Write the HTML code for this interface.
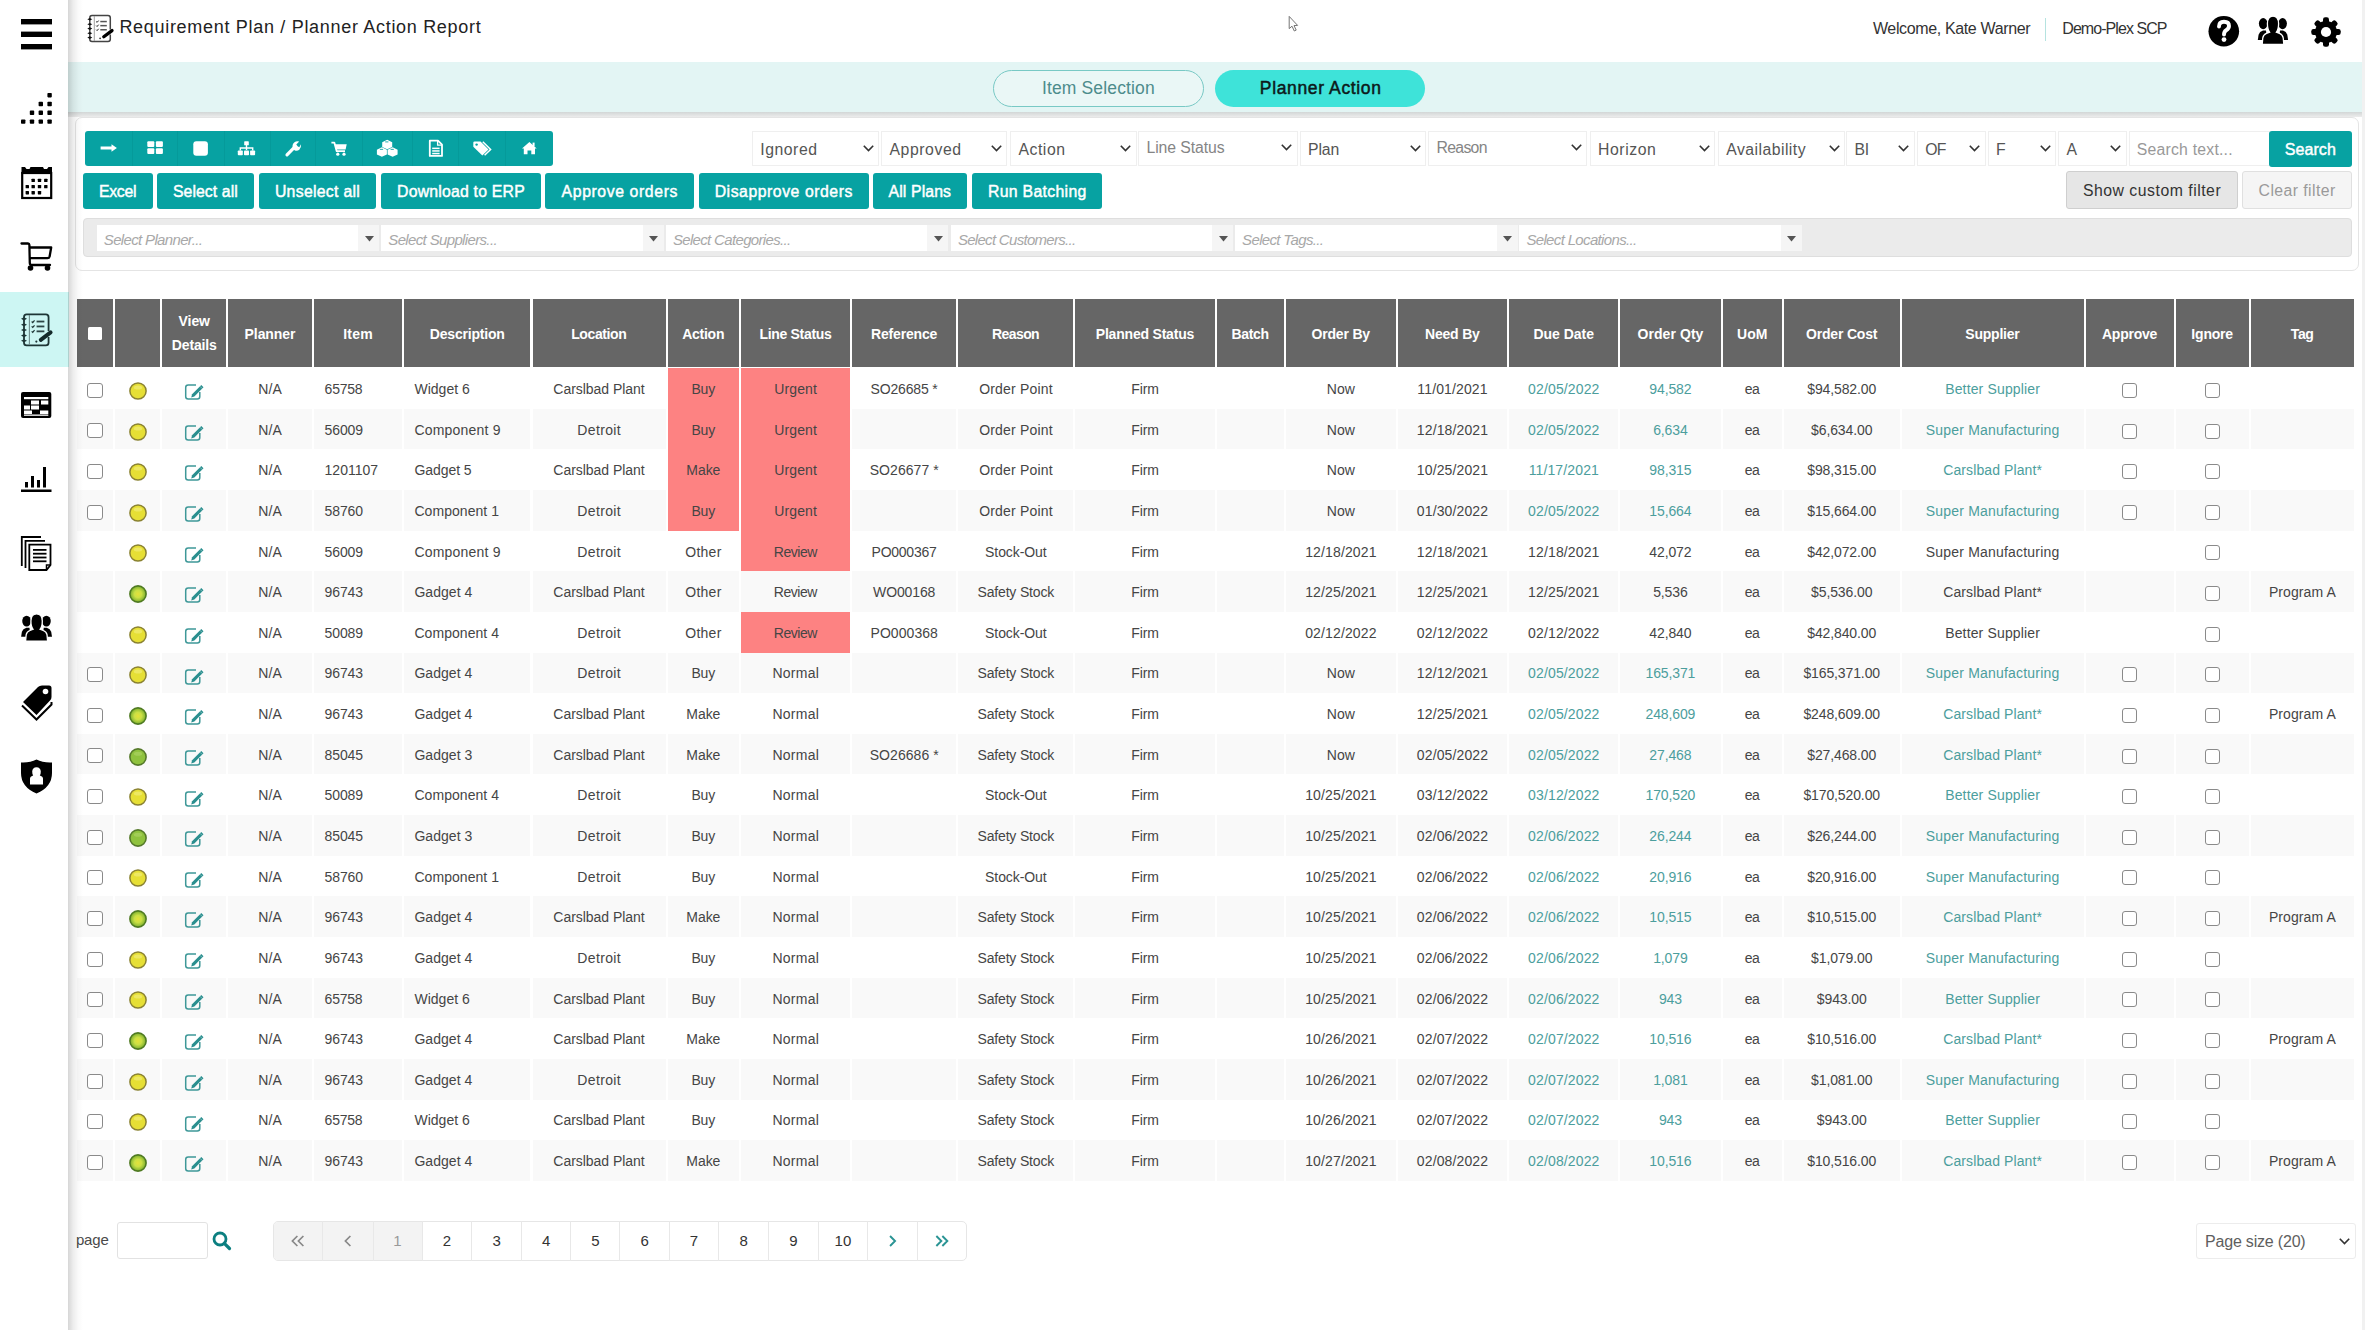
<!DOCTYPE html><html><head><meta charset="utf-8"><style>
html,body{margin:0;padding:0;}
body{width:2365px;height:1330px;position:relative;overflow:hidden;background:#fff;font-family:"Liberation Sans",sans-serif;color:#333;}
.ab{position:absolute;}
svg{position:absolute;overflow:visible;}
.t{position:absolute;white-space:nowrap;}
.btn{position:absolute;background:#07a2a2;border-radius:3px;color:#fff;font-weight:bold;font-size:15.5px;text-align:center;}
.sel{position:absolute;background:#fff;border:1px solid #efefef;box-sizing:border-box;color:#555;font-size:16.5px;}
.fsel{position:absolute;background:#fff;box-sizing:border-box;height:25.7px;top:224.9px;}
.farr{position:absolute;background:#f5f5f5;height:25.7px;top:224.9px;}
.ftxt{position:absolute;font-style:italic;color:#aaa;font-size:14px;top:5px;left:7px;white-space:nowrap;}
.hc{position:absolute;top:299.4px;height:68px;background:#666;color:#fff;font-weight:bold;font-size:14px;text-align:center;}
.c{position:absolute;height:40.63px;text-align:center;font-size:13.5px;color:#333;white-space:nowrap;}
.lk{color:#3aa7a7;}
.pg{position:absolute;top:1220.8px;height:40.2px;box-sizing:border-box;text-align:center;font-size:16px;color:#333;}
</style></head><body>

<div class="ab" style="left:0;top:0;width:68px;height:1330px;background:#fff"></div>
<div class="ab" style="left:0;top:292px;width:68.5px;height:74.5px;background:#cdf6f3"></div>
<svg style="left:21px;top:18.6px" width="31" height="31" viewBox="0 0 31 31"><rect x="0" y="0" width="31" height="5.4" fill="#000"/><rect x="0" y="12.6" width="31" height="5.4" fill="#000"/><rect x="0" y="25" width="31" height="5.4" fill="#000"/></svg>
<svg style="left:21px;top:92.9px" width="31" height="31" viewBox="0 0 31 31"><rect x="26.4" y="0.0" width="4.4" height="4.4" rx="0.8" fill="#000"/><rect x="17.6" y="8.799999999999997" width="4.4" height="4.4" rx="0.8" fill="#000"/><rect x="26.4" y="8.799999999999997" width="4.4" height="4.4" rx="0.8" fill="#000"/><rect x="8.8" y="17.599999999999994" width="4.4" height="4.4" rx="0.8" fill="#000"/><rect x="17.6" y="17.599999999999994" width="4.4" height="4.4" rx="0.8" fill="#000"/><rect x="26.4" y="17.599999999999994" width="4.4" height="4.4" rx="0.8" fill="#000"/><rect x="0" y="26.39999999999999" width="4.4" height="4.4" rx="0.8" fill="#000"/><rect x="8.8" y="26.39999999999999" width="4.4" height="4.4" rx="0.8" fill="#000"/><rect x="17.6" y="26.39999999999999" width="4.4" height="4.4" rx="0.8" fill="#000"/><rect x="26.4" y="26.39999999999999" width="4.4" height="4.4" rx="0.8" fill="#000"/></svg>
<svg style="left:20.8px;top:165.9px" width="31" height="33" viewBox="0 0 31 33"><path d="M0.5 1 L4 1 L5.5 3 L8.5 3 L9.5 1 L22 1 L23 3 L26 3 L27.5 1 L31 1 L31 8 L0.5 8 Z" fill="#000"/><rect x="1.2" y="7" width="29" height="25" fill="none" stroke="#000" stroke-width="2.2"/><rect x="10.5" y="12.700000000000006" width="3.4" height="3.4" rx="0.6" fill="#000"/><rect x="16.799999999999997" y="12.700000000000006" width="3.4" height="3.4" rx="0.6" fill="#000"/><rect x="23.1" y="12.700000000000006" width="3.4" height="3.4" rx="0.6" fill="#000"/><rect x="4.6000000000000005" y="18.899999999999995" width="3.4" height="3.4" rx="0.6" fill="#000"/><rect x="10.5" y="18.899999999999995" width="3.4" height="3.4" rx="0.6" fill="#000"/><rect x="16.799999999999997" y="18.899999999999995" width="3.4" height="3.4" rx="0.6" fill="#000"/><rect x="23.1" y="18.899999999999995" width="3.4" height="3.4" rx="0.6" fill="#000"/><rect x="4.6000000000000005" y="24.99999999999999" width="3.4" height="3.4" rx="0.6" fill="#000"/><rect x="10.5" y="24.99999999999999" width="3.4" height="3.4" rx="0.6" fill="#000"/><rect x="16.799999999999997" y="24.99999999999999" width="3.4" height="3.4" rx="0.6" fill="#000"/></svg>
<svg style="left:20.8px;top:242px" width="31" height="29" viewBox="0 0 31 29"><path d="M0.5 1.5 L7 1.5 Q8.3 1.5 8.4 3 L8.8 21 Q8.8 23 11 23 L29 23" fill="none" stroke="#000" stroke-width="2.3" stroke-linecap="round" stroke-linejoin="round"/><path d="M8.5 5.5 L30.2 5.5 L28.6 14.5 Q28.2 16.2 26.4 16.2 L8.7 16.2" fill="none" stroke="#000" stroke-width="2.3" stroke-linejoin="round"/><circle cx="9.5" cy="26" r="2.8" fill="#000"/><circle cx="26.5" cy="26" r="2.8" fill="#000"/></svg>
<svg style="left:21.2px;top:391.9px" width="31" height="26" viewBox="0 0 31 26"><rect x="0" y="0" width="30.3" height="26" rx="2" fill="#000"/><rect x="3" y="5" width="24.3" height="2.2" fill="#fff"/><rect x="10" y="8.5" width="8" height="4" fill="#fff"/><rect x="20" y="8.5" width="7.3" height="4" fill="#fff"/><rect x="3" y="13.5" width="6" height="4" fill="#fff"/><rect x="10" y="13.5" width="8" height="4" fill="#fff"/><rect x="3" y="18.5" width="8" height="3.5" fill="#fff"/><rect x="19" y="18.5" width="8.3" height="3.5" fill="#fff"/><rect x="3" y="22.5" width="24.3" height="1.3" fill="#fff"/></svg>
<svg style="left:21px;top:466.5px" width="31" height="25" viewBox="0 0 31 25"><rect x="0" y="22.5" width="30.5" height="2.5" fill="#000"/><rect x="4" y="15" width="3" height="5.5" fill="#000"/><rect x="10" y="9" width="3" height="11.5" fill="#000"/><rect x="16" y="13" width="3" height="7.5" fill="#000"/><rect x="22" y="0" width="3" height="20.5" fill="#000"/></svg>
<svg style="left:21px;top:536px" width="31" height="35" viewBox="0 0 31 35"><path d="M0.8 30 L0.8 1 L20 1" fill="none" stroke="#000" stroke-width="1.8"/><path d="M4.5 32 L4.5 4.8 L24 4.8" fill="none" stroke="#000" stroke-width="1.8"/><path d="M8.3 8.6 L29.5 8.6 L29.5 29 L25.5 34 L8.3 34 Z" fill="#fff" stroke="#000" stroke-width="1.8"/><path d="M25.5 34 L25.5 29 L29.5 29" fill="none" stroke="#000" stroke-width="1.5"/><rect x="12" y="13.0" width="13.5" height="1.8" fill="#000"/><rect x="12" y="16.8" width="13.5" height="1.8" fill="#000"/><rect x="12" y="20.6" width="13.5" height="1.8" fill="#000"/><rect x="12" y="24.4" width="13.5" height="1.8" fill="#000"/></svg>
<svg style="left:21px;top:613.5px" width="31" height="27" viewBox="0 0 30.4 28.2" preserveAspectRatio="none"><ellipse cx="5.5" cy="7.4" rx="4.3" ry="5.6" fill="#000"/><path d="M0.1 23.8 L0.9 18.6 Q1.8 15.4 5.3 14.4 L8.3 14.4 L9.3 23.8 Z" fill="#000"/><ellipse cx="24.9" cy="7.4" rx="4.3" ry="5.6" fill="#000"/><path d="M30.4 23.8 L29.6 18.6 Q28.7 15.4 25.3 14.4 L22.3 14.4 L21.3 23.8 Z" fill="#000"/><path d="M4.5 28.2 L5.1 21.6 Q5.7 18.4 8.8 17.2 L11.9 16 Q9.7 13.3 9.7 7.4 Q9.9 0 15.3 0 Q20.7 0 20.9 7.4 Q20.9 13.3 18.7 16 L21.8 17.2 Q24.9 18.4 25.5 21.6 L26.1 28.2 Z" fill="#000" stroke="#fff" stroke-width="1.3"/></svg>
<svg style="left:21px;top:685px" width="31" height="35" viewBox="0 0 31 35"><path d="M1 20.5 L15.5 34.5 L30.5 19.5 L30.5 17" fill="none" stroke="#000" stroke-width="2"/><path d="M2 17 L17 2 Q18.5 0.5 21 0.5 L28 0.5 Q30.5 0.5 30.5 3 L30.5 12 Q30.5 14 29 15.5 L15.5 30 Z" fill="#000"/><circle cx="24.5" cy="6.5" r="2.8" fill="#fff"/></svg>
<svg style="left:21px;top:759px" width="31" height="35" viewBox="0 0 31 35"><path d="M15.5 0.5 Q22 4 31 3.5 L31 14 Q31 28 15.5 34.5 Q0 28 0 14 L0 3.5 Q9 4 15.5 0.5 Z" fill="#000"/><path d="M9 25.5 L9 19.5 Q9 17.5 11 17 L12.2 16.6 Q11.2 15.4 11.2 12.5 Q11.4 8.5 15.5 8.3 Q19.6 8.5 19.8 12.5 Q19.8 15.4 18.8 16.6 L20 17 Q22 17.5 22 19.5 L22 25.5 Z" fill="#fff"/></svg>
<div class="ab" style="left:68px;top:0;width:15px;height:1330px;background:linear-gradient(to right,rgba(0,0,0,0.16),rgba(0,0,0,0.07) 35%,rgba(0,0,0,0.02) 70%,rgba(0,0,0,0));z-index:5"></div>
<div class="ab" style="left:2361.5px;top:0;width:3.5px;height:1330px;background:#f1f1f1"></div>
<svg style="left:0;top:0" width="130" height="50" viewBox="0 0 130 50"><path d="M92 15.6 L108 15.6 Q110.3 15.6 110.3 17.9 L110.3 29.5 M110.3 34.5 L110.3 39.3 Q110.3 41.5 108 41.5 L92 41.5 Q89.8 41.5 89.8 39.3 L89.8 17.9 Q89.8 15.6 92 15.6" fill="none" stroke="#444" stroke-width="1.5"/><line x1="94.3" y1="16" x2="94.3" y2="41" stroke="#999" stroke-width="0.9"/><path d="M87.3 19.3 L89.8 18.0 L92.3 19.3 L89.8 20.6 Z" fill="#111"/><path d="M87.3 24.2 L89.8 22.9 L92.3 24.2 L89.8 25.5 Z" fill="#111"/><path d="M87.3 28.6 L89.8 27.3 L92.3 28.6 L89.8 29.900000000000002 Z" fill="#111"/><path d="M87.3 33.3 L89.8 31.999999999999996 L92.3 33.3 L89.8 34.599999999999994 Z" fill="#111"/><path d="M87.3 37.6 L89.8 36.300000000000004 L92.3 37.6 L89.8 38.9 Z" fill="#111"/><path d="M96.2 21.5 l0.9 0.9 l1.5 -1.8" fill="none" stroke="#222" stroke-width="1"/><rect x="100.3" y="20.8" width="6.5" height="1.5" fill="#555"/><path d="M96.2 25.6 l0.9 0.9 l1.5 -1.8" fill="none" stroke="#222" stroke-width="1"/><rect x="100.3" y="24.900000000000002" width="6.5" height="1.5" fill="#555"/><path d="M96.2 29.7 l0.9 0.9 l1.5 -1.8" fill="none" stroke="#222" stroke-width="1"/><rect x="100.3" y="29.0" width="6.5" height="1.5" fill="#555"/><path d="M103.8 36.8 L112 30.6" stroke="#000" stroke-width="3.3" stroke-linecap="round"/><circle cx="100.1" cy="38.3" r="0.9" fill="#333"/></svg>
<svg style="left:21.2px;top:313.7px" width="32" height="34" viewBox="87.3 15.3 26.7 28.3"><path d="M92 15.6 L108 15.6 Q110.3 15.6 110.3 17.9 L110.3 29.5 M110.3 34.5 L110.3 39.3 Q110.3 41.5 108 41.5 L92 41.5 Q89.8 41.5 89.8 39.3 L89.8 17.9 Q89.8 15.6 92 15.6" fill="none" stroke="#1d3535" stroke-width="1.5"/><line x1="94.3" y1="16" x2="94.3" y2="41" stroke="#6a8a8a" stroke-width="0.9"/><path d="M87.3 19.3 L89.8 18.0 L92.3 19.3 L89.8 20.6 Z" fill="#1d3535"/><path d="M87.3 24.2 L89.8 22.9 L92.3 24.2 L89.8 25.5 Z" fill="#1d3535"/><path d="M87.3 28.6 L89.8 27.3 L92.3 28.6 L89.8 29.900000000000002 Z" fill="#1d3535"/><path d="M87.3 33.3 L89.8 31.999999999999996 L92.3 33.3 L89.8 34.599999999999994 Z" fill="#1d3535"/><path d="M87.3 37.6 L89.8 36.300000000000004 L92.3 37.6 L89.8 38.9 Z" fill="#1d3535"/><path d="M96.2 21.5 l0.9 0.9 l1.5 -1.8" fill="none" stroke="#1d3535" stroke-width="1"/><rect x="100.3" y="20.8" width="6.5" height="1.5" fill="#2d4545"/><path d="M96.2 25.6 l0.9 0.9 l1.5 -1.8" fill="none" stroke="#1d3535" stroke-width="1"/><rect x="100.3" y="24.900000000000002" width="6.5" height="1.5" fill="#2d4545"/><path d="M96.2 29.7 l0.9 0.9 l1.5 -1.8" fill="none" stroke="#1d3535" stroke-width="1"/><rect x="100.3" y="29.0" width="6.5" height="1.5" fill="#2d4545"/><path d="M103.8 36.8 L112 30.6" stroke="#142a2a" stroke-width="3.3" stroke-linecap="round"/><circle cx="100.1" cy="38.3" r="0.9" fill="#1d3535"/></svg>
<div class="t" style="left:119.4px;top:18.16px;font-size:18px;line-height:18px;color:#222;letter-spacing:0.695px;">Requirement Plan / Planner Action Report</div>
<div class="t" style="left:1872.9px;top:20.96px;font-size:16px;line-height:16px;color:#333;letter-spacing:-0.360px;">Welcome, Kate Warner</div>
<div class="ab" style="left:2045px;top:17.8px;width:1.3px;height:23px;background:#b5e3e0"></div>
<div class="t" style="left:2062.3px;top:20.96px;font-size:16px;line-height:16px;color:#333;letter-spacing:-0.944px;">Demo-Plex SCP</div>
<svg style="left:0;top:0" width="2365" height="60" viewBox="0 0 2365 60"><circle cx="2223.8" cy="31.3" r="15.3" fill="#000"/><path d="M2219 26.5 Q2219 21.8 2224 21.8 Q2229 21.8 2229 26 Q2229 28.6 2226.2 30.2 Q2224 31.5 2224 34.6" fill="none" stroke="#fff" stroke-width="3.9" stroke-linecap="round" stroke-linejoin="round"/><circle cx="2224" cy="39.6" r="2.4" fill="#fff"/><ellipse cx="2263.2" cy="23.6" rx="4.3" ry="5.6" fill="#000"/><path d="M2257.8 40 L2258.6 34.8 Q2259.5 31.6 2263 30.6 L2266 30.6 L2267 40 Z" fill="#000"/><ellipse cx="2282.6" cy="23.6" rx="4.3" ry="5.6" fill="#000"/><path d="M2288.1 40 L2287.3 34.8 Q2286.4 31.6 2283 30.6 L2280 30.6 L2279 40 Z" fill="#000"/><path d="M2262.2 44.4 L2262.8 37.8 Q2263.4 34.6 2266.5 33.4 L2269.6 32.2 Q2267.4 29.5 2267.4 23.6 Q2267.6 16.2 2273 16.2 Q2278.4 16.2 2278.6 23.6 Q2278.6 29.5 2276.4 32.2 L2279.5 33.4 Q2282.6 34.6 2283.2 37.8 L2283.8 44.4 Z" fill="#000" stroke="#fff" stroke-width="1.3"/></svg>
<svg style="left:2296px;top:2px" width="60" height="60" viewBox="-30 -30 60 60"><g transform="translate(0 0)"><rect x="-3" y="-14.7" width="6" height="8" rx="2.2" fill="#000" transform="rotate(0)"/><rect x="-3" y="-14.7" width="6" height="8" rx="2.2" fill="#000" transform="rotate(45)"/><rect x="-3" y="-14.7" width="6" height="8" rx="2.2" fill="#000" transform="rotate(90)"/><rect x="-3" y="-14.7" width="6" height="8" rx="2.2" fill="#000" transform="rotate(135)"/><rect x="-3" y="-14.7" width="6" height="8" rx="2.2" fill="#000" transform="rotate(180)"/><rect x="-3" y="-14.7" width="6" height="8" rx="2.2" fill="#000" transform="rotate(225)"/><rect x="-3" y="-14.7" width="6" height="8" rx="2.2" fill="#000" transform="rotate(270)"/><rect x="-3" y="-14.7" width="6" height="8" rx="2.2" fill="#000" transform="rotate(315)"/><circle r="11" fill="#000"/><circle r="5.1" fill="#fff"/></g></svg>
<svg style="left:0;top:0" width="1400" height="40" viewBox="0 0 1400 40"><path d="M1289.2 16.4 L1289.2 28.6 L1292 26.2 L1294.3 31 L1296.2 30.1 L1294 25.6 L1297.6 25.4 Z" fill="#fff" stroke="#666" stroke-width="0.9" stroke-linejoin="round"/></svg>
<div class="ab" style="left:68px;top:61.8px;width:2294px;height:50.6px;background:#e3f5f4"></div>
<div class="ab" style="left:68px;top:112.4px;width:2294px;height:5px;background:linear-gradient(to bottom,#d2d6d6,#ececec)"></div>
<div class="ab" style="left:993px;top:69.6px;width:210.7px;height:37.9px;box-sizing:border-box;border:1.8px solid #78c9c5;border-radius:19px;background:#eaf7f6"></div>
<div class="t" style="left:993.075390625px;width:210.7px;text-align:center;top:80.09px;font-size:17.5px;line-height:17.5px;color:#4d8c8c;letter-spacing:0.151px;">Item Selection</div>
<div class="ab" style="left:1215.4px;top:70px;width:210px;height:37px;border-radius:19px;background:#3ee3d9"></div>
<div class="t" style="left:1215.7159598214287px;width:210px;text-align:center;top:80.09px;font-size:17.5px;line-height:17.5px;color:#0d1a1a;-webkit-text-stroke:0.5px #0d1a1a;letter-spacing:0.632px;">Planner Action</div>
<div class="ab" style="left:74.7px;top:117.3px;width:2284.3px;height:153.7px;box-sizing:border-box;border:1px solid #e4e4e4;border-radius:7px;background:#fff"></div>
<div class="ab" style="left:85.3px;top:130.6px;width:467.5px;height:35.9px;background:#07a2a2;border-radius:3px"></div>
<div class="ab" style="left:131.6px;top:130.6px;width:1px;height:35.9px;background:#059494;opacity:0.6"></div>
<div class="ab" style="left:177.3px;top:130.6px;width:1px;height:35.9px;background:#059494;opacity:0.6"></div>
<div class="ab" style="left:224.1px;top:130.6px;width:1px;height:35.9px;background:#059494;opacity:0.6"></div>
<div class="ab" style="left:269.5px;top:130.6px;width:1px;height:35.9px;background:#059494;opacity:0.6"></div>
<div class="ab" style="left:315.2px;top:130.6px;width:1px;height:35.9px;background:#059494;opacity:0.6"></div>
<div class="ab" style="left:362.0px;top:130.6px;width:1px;height:35.9px;background:#059494;opacity:0.6"></div>
<div class="ab" style="left:412.4px;top:130.6px;width:1px;height:35.9px;background:#059494;opacity:0.6"></div>
<div class="ab" style="left:458.0px;top:130.6px;width:1px;height:35.9px;background:#059494;opacity:0.6"></div>
<div class="ab" style="left:505.0px;top:130.6px;width:1px;height:35.9px;background:#059494;opacity:0.6"></div>
<svg style="left:0;top:0" width="600" height="200" viewBox="0 0 600 200"><path d="M100.6 146.6 L111.5 146.6 L111.5 144.2 L116.9 148 L111.5 151.7 L111.5 149.6 L100.6 149.6 Z" fill="#fff"/><rect x="147.3" y="141.2" width="7" height="5.7" rx="1" fill="#fff"/><rect x="155.9" y="141.2" width="7" height="5.7" rx="1" fill="#fff"/><rect x="147.3" y="148.3" width="7" height="5.7" rx="1" fill="#fff"/><rect x="155.9" y="148.3" width="7" height="5.7" rx="1" fill="#fff"/><rect x="193.3" y="141.3" width="14.6" height="14.4" rx="3" fill="#fff"/><rect x="244.2" y="141.3" width="4.6" height="4" rx="0.6" fill="#fff"/><path d="M246.5 145 L246.5 150 M240.3 150.5 L240.3 148 L252.7 148 L252.7 150.5" fill="none" stroke="#fff" stroke-width="1.4"/><rect x="237.8" y="150.5" width="5" height="4.8" rx="0.8" fill="#fff"/><rect x="244" y="150.5" width="5" height="4.8" rx="0.8" fill="#fff"/><rect x="250.1" y="150.5" width="5" height="4.8" rx="0.8" fill="#fff"/><path d="M287 154.8 L294.6 147.2" stroke="#fff" stroke-width="3.2" stroke-linecap="round"/><path d="M293 148.5 Q291.5 144.5 294.5 142.2 Q296.8 140.7 299.2 141.6 L296.3 144.6 L297.6 146.2 L299.3 147.2 L300.9 144.3 Q301.6 147.6 299.3 149.7 Q297 151.5 294.5 150.2 Z" fill="#fff"/><path d="M331.4 142.6 L334.3 142.6 L336.7 151.2 L345 151.2" fill="none" stroke="#fff" stroke-width="1.8" stroke-linejoin="round"/><path d="M334.5 144.3 L346.7 144.3 L345.6 149.6 L336.2 149.6 Z" fill="#fff"/><circle cx="337.8" cy="154.2" r="1.6" fill="#fff"/><circle cx="344" cy="154.2" r="1.6" fill="#fff"/><path d="M387.2 139.8 L392.2 142.175 L392.2 146.925 L387.2 149.3 L382.2 146.925 L382.2 142.175 Z" fill="#fff"/><path d="M385.2 141.89000000000001 L388.4 141.89000000000001" stroke="#07a2a2" stroke-width="1.1" opacity="0.8"/><path d="M381.9 147.3 L386.9 149.675 L386.9 154.425 L381.9 156.8 L376.9 154.425 L376.9 149.675 Z" fill="#fff"/><path d="M379.9 149.39000000000001 L383.09999999999997 149.39000000000001" stroke="#07a2a2" stroke-width="1.1" opacity="0.8"/><path d="M392.6 147.3 L397.6 149.675 L397.6 154.425 L392.6 156.8 L387.6 154.425 L387.6 149.675 Z" fill="#fff"/><path d="M390.6 149.39000000000001 L393.8 149.39000000000001" stroke="#07a2a2" stroke-width="1.1" opacity="0.8"/><path d="M429.8 140.7 L438 140.7 L442 144.7 L442 155.9 L429.8 155.9 Z" fill="none" stroke="#fff" stroke-width="1.8" stroke-linejoin="round"/><path d="M437.6 140.7 L437.6 145.1 L442 145.1" fill="none" stroke="#fff" stroke-width="1.3"/><rect x="432.2" y="147.6" width="7.4" height="1.5" fill="#fff"/><rect x="432.2" y="150.2" width="7.4" height="1.5" fill="#fff"/><rect x="432.2" y="152.8" width="7.4" height="1.5" fill="#fff"/><path d="M473.3 142.8 Q473.3 141.5 474.6 141.5 L480.5 141.5 L488.5 149.5 L482.3 155.5 L473.3 146.8 Z" fill="#fff"/><path d="M482.8 141.8 L490.6 149.5 L484.6 155.3" fill="none" stroke="#fff" stroke-width="1.5"/><circle cx="476.6" cy="144.6" r="1.2" fill="#07a2a2"/><path d="M522 148.6 L529.4 142 L536.7 148.6 L535 148.6 L535 154.2 L531.3 154.2 L531.3 150.6 L527.5 150.6 L527.5 154.2 L523.8 154.2 L523.8 148.6 Z" fill="#fff"/><rect x="532.6" y="142.6" width="2" height="3.8" fill="#fff"/></svg>
<div class="btn" style="left:83px;top:172.7px;width:69.5px;height:36.1px"></div>
<div class="t" style="left:82.88625px;width:69.5px;text-align:center;top:183.53px;font-size:15.8px;line-height:15.8px;color:#fff;-webkit-text-stroke:0.45px #fff;letter-spacing:-0.228px;">Excel</div>
<div class="btn" style="left:156.7px;top:172.7px;width:97.3px;height:36.1px"></div>
<div class="t" style="left:156.739375px;width:97.3px;text-align:center;top:183.53px;font-size:15.8px;line-height:15.8px;color:#fff;-webkit-text-stroke:0.45px #fff;letter-spacing:0.079px;">Select all</div>
<div class="btn" style="left:258.8px;top:172.7px;width:117.2px;height:36.1px"></div>
<div class="t" style="left:258.951171875px;width:117.2px;text-align:center;top:183.53px;font-size:15.8px;line-height:15.8px;color:#fff;-webkit-text-stroke:0.45px #fff;letter-spacing:0.302px;">Unselect all</div>
<div class="btn" style="left:380.8px;top:172.7px;width:160.2px;height:36.1px"></div>
<div class="t" style="left:380.90619791666666px;width:160.2px;text-align:center;top:183.53px;font-size:15.8px;line-height:15.8px;color:#fff;-webkit-text-stroke:0.45px #fff;letter-spacing:0.212px;">Download to ERP</div>
<div class="btn" style="left:545px;top:172.7px;width:149.0px;height:36.1px"></div>
<div class="t" style="left:545.2991629464286px;width:149px;text-align:center;top:183.53px;font-size:15.8px;line-height:15.8px;color:#fff;-webkit-text-stroke:0.45px #fff;letter-spacing:0.598px;">Approve orders</div>
<div class="btn" style="left:698.5px;top:172.7px;width:170.0px;height:36.1px"></div>
<div class="t" style="left:698.7707720588236px;width:170.0px;text-align:center;top:183.53px;font-size:15.8px;line-height:15.8px;color:#fff;-webkit-text-stroke:0.45px #fff;letter-spacing:0.542px;">Disapprove orders</div>
<div class="btn" style="left:872.8px;top:172.7px;width:94.0px;height:36.1px"></div>
<div class="t" style="left:872.8569444444444px;width:94.0px;text-align:center;top:183.53px;font-size:15.8px;line-height:15.8px;color:#fff;-webkit-text-stroke:0.45px #fff;letter-spacing:0.114px;">All Plans</div>
<div class="btn" style="left:971.8px;top:172.7px;width:130.7px;height:36.1px"></div>
<div class="t" style="left:971.9556640625px;width:130.7px;text-align:center;top:183.53px;font-size:15.8px;line-height:15.8px;color:#fff;-webkit-text-stroke:0.45px #fff;letter-spacing:0.311px;">Run Batching</div>
<div class="sel" style="left:751.8px;top:130.7px;width:127.2px;height:35.8px"></div>
<div class="t" style="left:760.3px;top:141.83px;font-size:15.8px;line-height:15.8px;color:#555;letter-spacing:0.516px;">Ignored</div>
<svg style="left:862.5px;top:145.2px" width="11" height="7" viewBox="0 0 11 7"><path d="M0.8 0.8 L5.5 5.6 L10.2 0.8" fill="none" stroke="#333" stroke-width="1.6"/></svg>
<div class="sel" style="left:881px;top:130.7px;width:126.4px;height:35.8px"></div>
<div class="t" style="left:889.5px;top:141.83px;font-size:15.8px;line-height:15.8px;color:#555;letter-spacing:0.558px;">Approved</div>
<svg style="left:990.9px;top:145.2px" width="11" height="7" viewBox="0 0 11 7"><path d="M0.8 0.8 L5.5 5.6 L10.2 0.8" fill="none" stroke="#333" stroke-width="1.6"/></svg>
<div class="sel" style="left:1010px;top:130.7px;width:126.8px;height:35.8px"></div>
<div class="t" style="left:1018.5px;top:141.83px;font-size:15.8px;line-height:15.8px;color:#555;letter-spacing:0.514px;">Action</div>
<svg style="left:1120.3px;top:145.2px" width="11" height="7" viewBox="0 0 11 7"><path d="M0.8 0.8 L5.5 5.6 L10.2 0.8" fill="none" stroke="#333" stroke-width="1.6"/></svg>
<div class="sel" style="left:1138px;top:130.7px;width:159.7px;height:35.8px"></div>
<div class="t" style="left:1146.5px;top:140.33px;font-size:15.8px;line-height:15.8px;color:#858585;letter-spacing:-0.087px;">Line Status</div>
<svg style="left:1281.2px;top:143.7px" width="11" height="7" viewBox="0 0 11 7"><path d="M0.8 0.8 L5.5 5.6 L10.2 0.8" fill="none" stroke="#333" stroke-width="1.6"/></svg>
<div class="sel" style="left:1299.5px;top:130.7px;width:126.5px;height:35.8px"></div>
<div class="t" style="left:1308.0px;top:141.83px;font-size:15.8px;line-height:15.8px;color:#555;letter-spacing:-0.106px;">Plan</div>
<svg style="left:1409.5px;top:145.2px" width="11" height="7" viewBox="0 0 11 7"><path d="M0.8 0.8 L5.5 5.6 L10.2 0.8" fill="none" stroke="#333" stroke-width="1.6"/></svg>
<div class="sel" style="left:1428px;top:130.7px;width:159.0px;height:35.8px"></div>
<div class="t" style="left:1436.5px;top:140.33px;font-size:15.8px;line-height:15.8px;color:#858585;letter-spacing:-0.693px;">Reason</div>
<svg style="left:1570.5px;top:143.7px" width="11" height="7" viewBox="0 0 11 7"><path d="M0.8 0.8 L5.5 5.6 L10.2 0.8" fill="none" stroke="#333" stroke-width="1.6"/></svg>
<div class="sel" style="left:1589.6px;top:130.7px;width:125.4px;height:35.8px"></div>
<div class="t" style="left:1598.1px;top:141.83px;font-size:15.8px;line-height:15.8px;color:#555;letter-spacing:0.536px;">Horizon</div>
<svg style="left:1698.5px;top:145.2px" width="11" height="7" viewBox="0 0 11 7"><path d="M0.8 0.8 L5.5 5.6 L10.2 0.8" fill="none" stroke="#333" stroke-width="1.6"/></svg>
<div class="sel" style="left:1717.8px;top:130.7px;width:127.2px;height:35.8px"></div>
<div class="t" style="left:1726.3px;top:141.83px;font-size:15.8px;line-height:15.8px;color:#555;letter-spacing:0.445px;">Availability</div>
<svg style="left:1828.5px;top:145.2px" width="11" height="7" viewBox="0 0 11 7"><path d="M0.8 0.8 L5.5 5.6 L10.2 0.8" fill="none" stroke="#333" stroke-width="1.6"/></svg>
<div class="sel" style="left:1846px;top:130.7px;width:68.7px;height:35.8px"></div>
<div class="t" style="left:1854.5px;top:141.83px;font-size:15.8px;line-height:15.8px;color:#555;letter-spacing:-0.314px;">BI</div>
<svg style="left:1898.2px;top:145.2px" width="11" height="7" viewBox="0 0 11 7"><path d="M0.8 0.8 L5.5 5.6 L10.2 0.8" fill="none" stroke="#333" stroke-width="1.6"/></svg>
<div class="sel" style="left:1916.8px;top:130.7px;width:69.0px;height:35.8px"></div>
<div class="t" style="left:1925.3px;top:141.83px;font-size:15.8px;line-height:15.8px;color:#555;letter-spacing:-0.820px;">OF</div>
<svg style="left:1969.3px;top:145.2px" width="11" height="7" viewBox="0 0 11 7"><path d="M0.8 0.8 L5.5 5.6 L10.2 0.8" fill="none" stroke="#333" stroke-width="1.6"/></svg>
<div class="sel" style="left:1987.6px;top:130.7px;width:68.8px;height:35.8px"></div>
<div class="t" style="left:1996.1px;top:141.83px;font-size:15.8px;line-height:15.8px;color:#555;letter-spacing:-2.152px;">F</div>
<svg style="left:2039.9px;top:145.2px" width="11" height="7" viewBox="0 0 11 7"><path d="M0.8 0.8 L5.5 5.6 L10.2 0.8" fill="none" stroke="#333" stroke-width="1.6"/></svg>
<div class="sel" style="left:2058px;top:130.7px;width:68.7px;height:35.8px"></div>
<div class="t" style="left:2066.5px;top:141.83px;font-size:15.8px;line-height:15.8px;color:#555;letter-spacing:-0.439px;">A</div>
<svg style="left:2110.2px;top:145.2px" width="11" height="7" viewBox="0 0 11 7"><path d="M0.8 0.8 L5.5 5.6 L10.2 0.8" fill="none" stroke="#333" stroke-width="1.6"/></svg>
<div class="sel" style="left:2128.5px;top:130.7px;width:141px;height:35.8px"></div>
<div class="t" style="left:2136.8px;top:141.83px;font-size:15.8px;line-height:15.8px;color:#999;letter-spacing:0.208px;">Search text...</div>
<div class="ab" style="left:2268.8px;top:130.5px;width:83px;height:36.3px;background:#07a2a2;border-radius:3px"></div>
<div class="t" style="left:2268.842057291667px;width:83px;text-align:center;top:141.66px;font-size:16px;line-height:16px;color:#fff;-webkit-text-stroke:0.45px #fff;letter-spacing:0.084px;">Search</div>
<div class="ab" style="left:2066px;top:171.3px;width:171.6px;height:37.3px;box-sizing:border-box;background:#e6e6e6;border:1px solid #cfcfcf;border-radius:3px"></div>
<div class="t" style="left:2066.2562065972224px;width:171.6px;text-align:center;top:182.63px;font-size:15.8px;line-height:15.8px;color:#333;letter-spacing:0.512px;">Show custom filter</div>
<div class="ab" style="left:2242px;top:171.3px;width:109.8px;height:37.3px;box-sizing:border-box;background:#f5f5f5;border:1px solid #e0e0e0;border-radius:3px"></div>
<div class="t" style="left:2242.208528645833px;width:109.8px;text-align:center;top:182.63px;font-size:15.8px;line-height:15.8px;color:#9a9a9a;letter-spacing:0.417px;">Clear filter</div>
<div class="ab" style="left:82.6px;top:218px;width:2269.2px;height:39.4px;box-sizing:border-box;background:#ebebeb;border:1px solid #dedede;border-radius:4px"></div>
<div class="fsel" style="left:96.7px;width:261.5px"></div>
<div class="farr" style="left:358.2px;width:21.2px"></div>
<div class="t" style="left:103.8px;top:231.90px;font-size:15px;line-height:15px;color:#a8a8a8;font-style:italic;letter-spacing:-0.653px;">Select Planner...</div>
<svg style="left:364.5px;top:235.5px" width="9" height="5.5" viewBox="0 0 9 5.5"><path d="M0 0 L9 0 L4.5 5.5 Z" fill="#555"/></svg>
<div class="fsel" style="left:381.2px;width:261.5px"></div>
<div class="farr" style="left:642.7px;width:21.2px"></div>
<div class="t" style="left:388.3px;top:231.90px;font-size:15px;line-height:15px;color:#a8a8a8;font-style:italic;letter-spacing:-0.645px;">Select Suppliers...</div>
<svg style="left:649.0px;top:235.5px" width="9" height="5.5" viewBox="0 0 9 5.5"><path d="M0 0 L9 0 L4.5 5.5 Z" fill="#555"/></svg>
<div class="fsel" style="left:665.8px;width:261.5px"></div>
<div class="farr" style="left:927.3px;width:21.2px"></div>
<div class="t" style="left:672.9px;top:231.90px;font-size:15px;line-height:15px;color:#a8a8a8;font-style:italic;letter-spacing:-0.664px;">Select Categories...</div>
<svg style="left:933.6px;top:235.5px" width="9" height="5.5" viewBox="0 0 9 5.5"><path d="M0 0 L9 0 L4.5 5.5 Z" fill="#555"/></svg>
<div class="fsel" style="left:950.8px;width:261.5px"></div>
<div class="farr" style="left:1212.3px;width:21.2px"></div>
<div class="t" style="left:957.9px;top:231.90px;font-size:15px;line-height:15px;color:#a8a8a8;font-style:italic;letter-spacing:-0.698px;">Select Customers...</div>
<svg style="left:1218.6px;top:235.5px" width="9" height="5.5" viewBox="0 0 9 5.5"><path d="M0 0 L9 0 L4.5 5.5 Z" fill="#555"/></svg>
<div class="fsel" style="left:1235px;width:261.5px"></div>
<div class="farr" style="left:1496.5px;width:21.2px"></div>
<div class="t" style="left:1242.1px;top:231.90px;font-size:15px;line-height:15px;color:#a8a8a8;font-style:italic;letter-spacing:-0.654px;">Select Tags...</div>
<svg style="left:1502.8px;top:235.5px" width="9" height="5.5" viewBox="0 0 9 5.5"><path d="M0 0 L9 0 L4.5 5.5 Z" fill="#555"/></svg>
<div class="fsel" style="left:1519.3px;width:261.5px"></div>
<div class="farr" style="left:1780.8px;width:21.2px"></div>
<div class="t" style="left:1526.3999999999999px;top:231.90px;font-size:15px;line-height:15px;color:#a8a8a8;font-style:italic;letter-spacing:-0.654px;">Select Locations...</div>
<svg style="left:1787.1px;top:235.5px" width="9" height="5.5" viewBox="0 0 9 5.5"><path d="M0 0 L9 0 L4.5 5.5 Z" fill="#555"/></svg>
<div class="hc" style="left:77.0px;width:35.6px"></div>
<div class="hc" style="left:114.6px;width:45.7px"></div>
<div class="hc" style="left:162.3px;width:64.0px"></div>
<div class="t" style="left:162.2564453125px;width:64.0px;text-align:center;top:313.75px;font-size:14px;line-height:14px;color:#fff;font-weight:bold;letter-spacing:-0.087px;">View</div>
<div class="t" style="left:162.22075892857143px;width:64.0px;text-align:center;top:338.25px;font-size:14px;line-height:14px;color:#fff;font-weight:bold;letter-spacing:-0.158px;">Details</div>
<div class="hc" style="left:228.3px;width:83.5px"></div>
<div class="t" style="left:228.275px;width:83.5px;text-align:center;top:326.95px;font-size:14px;line-height:14px;color:#fff;font-weight:bold;letter-spacing:-0.050px;">Planner</div>
<div class="hc" style="left:313.8px;width:88.4px"></div>
<div class="t" style="left:313.9017578125px;width:88.4px;text-align:center;top:326.95px;font-size:14px;line-height:14px;color:#fff;font-weight:bold;letter-spacing:0.204px;">Item</div>
<div class="hc" style="left:404.2px;width:126.3px"></div>
<div class="t" style="left:404.0994318181818px;width:126.3px;text-align:center;top:326.95px;font-size:14px;line-height:14px;color:#fff;font-weight:bold;letter-spacing:-0.201px;">Description</div>
<div class="hc" style="left:532.5px;width:133.0px"></div>
<div class="t" style="left:532.31064453125px;width:133.0px;text-align:center;top:326.95px;font-size:14px;line-height:14px;color:#fff;font-weight:bold;letter-spacing:-0.379px;">Location</div>
<div class="hc" style="left:667.5px;width:71.7px"></div>
<div class="t" style="left:667.3623697916667px;width:71.7px;text-align:center;top:326.95px;font-size:14px;line-height:14px;color:#fff;font-weight:bold;letter-spacing:-0.275px;">Action</div>
<div class="hc" style="left:741.2px;width:108.8px"></div>
<div class="t" style="left:741.0475852272727px;width:108.8px;text-align:center;top:326.95px;font-size:14px;line-height:14px;color:#fff;font-weight:bold;letter-spacing:-0.305px;">Line Status</div>
<div class="hc" style="left:852.0px;width:104.4px"></div>
<div class="t" style="left:851.9053819444445px;width:104.4px;text-align:center;top:326.95px;font-size:14px;line-height:14px;color:#fff;font-weight:bold;letter-spacing:-0.189px;">Reference</div>
<div class="hc" style="left:958.4px;width:115.0px"></div>
<div class="t" style="left:958.1023437499999px;width:115.0px;text-align:center;top:326.95px;font-size:14px;line-height:14px;color:#fff;font-weight:bold;letter-spacing:-0.595px;">Reason</div>
<div class="hc" style="left:1075.4px;width:139.3px"></div>
<div class="t" style="left:1075.2989955357143px;width:139.3px;text-align:center;top:326.95px;font-size:14px;line-height:14px;color:#fff;font-weight:bold;letter-spacing:-0.202px;">Planned Status</div>
<div class="hc" style="left:1216.7px;width:67.3px"></div>
<div class="t" style="left:1216.5403125px;width:67.3px;text-align:center;top:326.95px;font-size:14px;line-height:14px;color:#fff;font-weight:bold;letter-spacing:-0.319px;">Batch</div>
<div class="hc" style="left:1286.0px;width:109.7px"></div>
<div class="t" style="left:1285.8994140625px;width:109.7px;text-align:center;top:326.95px;font-size:14px;line-height:14px;color:#fff;font-weight:bold;letter-spacing:-0.201px;">Order By</div>
<div class="hc" style="left:1397.7px;width:109.5px"></div>
<div class="t" style="left:1397.5985491071428px;width:109.5px;text-align:center;top:326.95px;font-size:14px;line-height:14px;color:#fff;font-weight:bold;letter-spacing:-0.203px;">Need By</div>
<div class="hc" style="left:1509.2px;width:109.1px"></div>
<div class="t" style="left:1509.18232421875px;width:109.1px;text-align:center;top:326.95px;font-size:14px;line-height:14px;color:#fff;font-weight:bold;letter-spacing:-0.035px;">Due Date</div>
<div class="hc" style="left:1620.3px;width:100.3px"></div>
<div class="t" style="left:1620.336111111111px;width:100.3px;text-align:center;top:326.95px;font-size:14px;line-height:14px;color:#fff;font-weight:bold;letter-spacing:0.072px;">Order Qty</div>
<div class="hc" style="left:1722.6px;width:59.4px"></div>
<div class="t" style="left:1722.6291666666666px;width:59.4px;text-align:center;top:326.95px;font-size:14px;line-height:14px;color:#fff;font-weight:bold;letter-spacing:0.058px;">UoM</div>
<div class="hc" style="left:1784.0px;width:115.5px"></div>
<div class="t" style="left:1783.898828125px;width:115.5px;text-align:center;top:326.95px;font-size:14px;line-height:14px;color:#fff;font-weight:bold;letter-spacing:-0.202px;">Order Cost</div>
<div class="hc" style="left:1901.5px;width:182.1px"></div>
<div class="t" style="left:1901.38095703125px;width:182.1px;text-align:center;top:326.95px;font-size:14px;line-height:14px;color:#fff;font-weight:bold;letter-spacing:-0.238px;">Supplier</div>
<div class="hc" style="left:2085.6px;width:88.2px"></div>
<div class="t" style="left:2085.48671875px;width:88.2px;text-align:center;top:326.95px;font-size:14px;line-height:14px;color:#fff;font-weight:bold;letter-spacing:-0.227px;">Approve</div>
<div class="hc" style="left:2175.8px;width:72.9px"></div>
<div class="t" style="left:2175.701822916667px;width:72.9px;text-align:center;top:326.95px;font-size:14px;line-height:14px;color:#fff;font-weight:bold;letter-spacing:-0.196px;">Ignore</div>
<div class="hc" style="left:2250.7px;width:103.3px"></div>
<div class="t" style="left:2250.508333333333px;width:103.3px;text-align:center;top:326.95px;font-size:14px;line-height:14px;color:#fff;font-weight:bold;letter-spacing:-0.383px;">Tag</div>
<div class="ab" style="left:88.3px;top:327.3px;width:13.3px;height:13.2px;background:#fff;border-radius:1.5px"></div>
<div class="ab" style="left:667.5px;top:368.20px;width:71.7px;height:40.93px;background:#fd8282"></div>
<div class="ab" style="left:741.2px;top:368.20px;width:108.8px;height:40.93px;background:#fd8282"></div>
<div class="ab" style="left:87.4px;top:382.80px;width:15.2px;height:15px;box-sizing:border-box;border:1.5px solid #8a8a8a;border-radius:3px;background:#fff"></div>
<svg style="left:129px;top:381.90px" width="18" height="18" viewBox="0 0 18 18"><circle cx="9" cy="9" r="8.1" fill="#e6df35" stroke="#8a8232" stroke-width="1.5"/><ellipse cx="9" cy="5.6" rx="4.2" ry="2" fill="#f4ef80" opacity="0.6"/></svg>
<svg style="left:185px;top:384.20px" width="19" height="16" viewBox="0 0 19 16"><path d="M11 1.1 L3.2 1.1 Q0.7 1.1 0.7 3.6 L0.7 12.6 Q0.7 15.1 3.2 15.1 L12.3 15.1 Q14.8 15.1 14.8 12.6 L14.8 8" fill="none" stroke="#3e9898" stroke-width="1.5"/><path d="M6.2 13.4 L7.1 10.2 L16.3 1 L18.5 3.2 L9.3 12.4 Z" fill="#2a8f8f"/><path d="M15 2.3 L17.2 4.5" stroke="#fff" stroke-width="0.6" opacity="0.7"/></svg>
<div class="t" style="left:228.34375px;width:83.5px;text-align:center;top:382.05px;font-size:14px;line-height:14px;color:#454545;letter-spacing:0.088px;">N/A</div>
<div class="t" style="left:532.4811941964285px;width:133.0px;text-align:center;top:382.05px;font-size:14px;line-height:14px;color:#454545;letter-spacing:-0.038px;">Carslbad Plant</div>
<div class="t" style="left:667.4294270833333px;width:71.7px;text-align:center;top:382.05px;font-size:14px;line-height:14px;color:#454545;letter-spacing:-0.141px;">Buy</div>
<div class="t" style="left:741.256640625px;width:108.8px;text-align:center;top:382.05px;font-size:14px;line-height:14px;color:#454545;letter-spacing:0.113px;">Urgent</div>
<div class="t" style="left:851.9170138888888px;width:104.4px;text-align:center;top:382.05px;font-size:14px;line-height:14px;color:#454545;letter-spacing:-0.166px;">SO26685 *</div>
<div class="t" style="left:958.4961647727273px;width:115.0px;text-align:center;top:382.05px;font-size:14px;line-height:14px;color:#454545;letter-spacing:0.192px;">Order Point</div>
<div class="t" style="left:1075.3640625px;width:139.3px;text-align:center;top:382.05px;font-size:14px;line-height:14px;color:#454545;letter-spacing:-0.072px;">Firm</div>
<div class="t" style="left:1286.0653645833333px;width:109.7px;text-align:center;top:382.05px;font-size:14px;line-height:14px;color:#454545;letter-spacing:0.131px;">Now</div>
<div class="t" style="left:1397.766417421875px;width:109.5px;text-align:center;top:382.05px;font-size:14px;line-height:14px;color:#454545;letter-spacing:0.133px;">11/01/2021</div>
<div class="t" style="left:1509.267396875px;width:109.1px;text-align:center;top:382.05px;font-size:14px;line-height:14px;color:#4c9e9d;letter-spacing:0.135px;">02/05/2022</div>
<div class="t" style="left:1620.2413411458333px;width:100.3px;text-align:center;top:382.05px;font-size:14px;line-height:14px;color:#4c9e9d;letter-spacing:-0.117px;">94,582</div>
<div class="t" style="left:1722.33203125px;width:59.4px;text-align:center;top:382.05px;font-size:14px;line-height:14px;color:#454545;letter-spacing:-0.536px;">ea</div>
<div class="t" style="left:1783.94240625px;width:115.5px;text-align:center;top:382.05px;font-size:14px;line-height:14px;color:#454545;letter-spacing:-0.115px;">$94,582.00</div>
<div class="t" style="left:1901.5731770833333px;width:182.1px;text-align:center;top:382.05px;font-size:14px;line-height:14px;color:#4c9e9d;letter-spacing:0.146px;">Better Supplier</div>
<div class="t" style="left:324.6px;top:382.05px;font-size:14px;line-height:14px;color:#454545;letter-spacing:-0.226px;">65758</div>
<div class="t" style="left:414.4px;top:382.05px;font-size:14px;line-height:14px;color:#454545;letter-spacing:0.032px;">Widget 6</div>
<div class="ab" style="left:2121.8px;top:382.90px;width:15.2px;height:15px;box-sizing:border-box;border:1.5px solid #8a8a8a;border-radius:3px;background:#fff"></div>
<div class="ab" style="left:2204.6px;top:382.90px;width:15.2px;height:15px;box-sizing:border-box;border:1.5px solid #8a8a8a;border-radius:3px;background:#fff"></div>
<div class="ab" style="left:77.0px;top:408.83px;width:35.6px;height:40.63px;background:#f9f9f9"></div>
<div class="ab" style="left:114.6px;top:408.83px;width:45.7px;height:40.63px;background:#f9f9f9"></div>
<div class="ab" style="left:162.3px;top:408.83px;width:64.0px;height:40.63px;background:#f9f9f9"></div>
<div class="ab" style="left:228.3px;top:408.83px;width:83.5px;height:40.63px;background:#f9f9f9"></div>
<div class="ab" style="left:313.8px;top:408.83px;width:88.4px;height:40.63px;background:#f9f9f9"></div>
<div class="ab" style="left:404.2px;top:408.83px;width:126.3px;height:40.63px;background:#f9f9f9"></div>
<div class="ab" style="left:532.5px;top:408.83px;width:133.0px;height:40.63px;background:#f9f9f9"></div>
<div class="ab" style="left:667.5px;top:408.83px;width:71.7px;height:40.63px;background:#f9f9f9"></div>
<div class="ab" style="left:741.2px;top:408.83px;width:108.8px;height:40.63px;background:#f9f9f9"></div>
<div class="ab" style="left:852.0px;top:408.83px;width:104.4px;height:40.63px;background:#f9f9f9"></div>
<div class="ab" style="left:958.4px;top:408.83px;width:115.0px;height:40.63px;background:#f9f9f9"></div>
<div class="ab" style="left:1075.4px;top:408.83px;width:139.3px;height:40.63px;background:#f9f9f9"></div>
<div class="ab" style="left:1216.7px;top:408.83px;width:67.3px;height:40.63px;background:#f9f9f9"></div>
<div class="ab" style="left:1286.0px;top:408.83px;width:109.7px;height:40.63px;background:#f9f9f9"></div>
<div class="ab" style="left:1397.7px;top:408.83px;width:109.5px;height:40.63px;background:#f9f9f9"></div>
<div class="ab" style="left:1509.2px;top:408.83px;width:109.1px;height:40.63px;background:#f9f9f9"></div>
<div class="ab" style="left:1620.3px;top:408.83px;width:100.3px;height:40.63px;background:#f9f9f9"></div>
<div class="ab" style="left:1722.6px;top:408.83px;width:59.4px;height:40.63px;background:#f9f9f9"></div>
<div class="ab" style="left:1784.0px;top:408.83px;width:115.5px;height:40.63px;background:#f9f9f9"></div>
<div class="ab" style="left:1901.5px;top:408.83px;width:182.1px;height:40.63px;background:#f9f9f9"></div>
<div class="ab" style="left:2085.6px;top:408.83px;width:88.2px;height:40.63px;background:#f9f9f9"></div>
<div class="ab" style="left:2175.8px;top:408.83px;width:72.9px;height:40.63px;background:#f9f9f9"></div>
<div class="ab" style="left:2250.7px;top:408.83px;width:103.3px;height:40.63px;background:#f9f9f9"></div>
<div class="ab" style="left:667.5px;top:408.83px;width:71.7px;height:40.93px;background:#fd8282"></div>
<div class="ab" style="left:741.2px;top:408.83px;width:108.8px;height:40.93px;background:#fd8282"></div>
<div class="ab" style="left:87.4px;top:423.43px;width:15.2px;height:15px;box-sizing:border-box;border:1.5px solid #8a8a8a;border-radius:3px;background:#fff"></div>
<svg style="left:129px;top:422.53px" width="18" height="18" viewBox="0 0 18 18"><circle cx="9" cy="9" r="8.1" fill="#e6df35" stroke="#8a8232" stroke-width="1.5"/><ellipse cx="9" cy="5.6" rx="4.2" ry="2" fill="#f4ef80" opacity="0.6"/></svg>
<svg style="left:185px;top:424.83px" width="19" height="16" viewBox="0 0 19 16"><path d="M11 1.1 L3.2 1.1 Q0.7 1.1 0.7 3.6 L0.7 12.6 Q0.7 15.1 3.2 15.1 L12.3 15.1 Q14.8 15.1 14.8 12.6 L14.8 8" fill="none" stroke="#3e9898" stroke-width="1.5"/><path d="M6.2 13.4 L7.1 10.2 L16.3 1 L18.5 3.2 L9.3 12.4 Z" fill="#2a8f8f"/><path d="M15 2.3 L17.2 4.5" stroke="#fff" stroke-width="0.6" opacity="0.7"/></svg>
<div class="t" style="left:228.34375px;width:83.5px;text-align:center;top:422.68px;font-size:14px;line-height:14px;color:#454545;letter-spacing:0.088px;">N/A</div>
<div class="t" style="left:532.6904017857142px;width:133.0px;text-align:center;top:422.68px;font-size:14px;line-height:14px;color:#454545;letter-spacing:0.381px;">Detroit</div>
<div class="t" style="left:667.4294270833333px;width:71.7px;text-align:center;top:422.68px;font-size:14px;line-height:14px;color:#454545;letter-spacing:-0.141px;">Buy</div>
<div class="t" style="left:741.256640625px;width:108.8px;text-align:center;top:422.68px;font-size:14px;line-height:14px;color:#454545;letter-spacing:0.113px;">Urgent</div>
<div class="t" style="left:958.4961647727273px;width:115.0px;text-align:center;top:422.68px;font-size:14px;line-height:14px;color:#454545;letter-spacing:0.192px;">Order Point</div>
<div class="t" style="left:1075.3640625px;width:139.3px;text-align:center;top:422.68px;font-size:14px;line-height:14px;color:#454545;letter-spacing:-0.072px;">Firm</div>
<div class="t" style="left:1286.0653645833333px;width:109.7px;text-align:center;top:422.68px;font-size:14px;line-height:14px;color:#454545;letter-spacing:0.131px;">Now</div>
<div class="t" style="left:1397.767396875px;width:109.5px;text-align:center;top:422.68px;font-size:14px;line-height:14px;color:#454545;letter-spacing:0.135px;">12/18/2021</div>
<div class="t" style="left:1509.267396875px;width:109.1px;text-align:center;top:422.68px;font-size:14px;line-height:14px;color:#4c9e9d;letter-spacing:0.135px;">02/05/2022</div>
<div class="t" style="left:1620.24240625px;width:100.3px;text-align:center;top:422.68px;font-size:14px;line-height:14px;color:#4c9e9d;letter-spacing:-0.115px;">6,634</div>
<div class="t" style="left:1722.33203125px;width:59.4px;text-align:center;top:422.68px;font-size:14px;line-height:14px;color:#454545;letter-spacing:-0.536px;">ea</div>
<div class="t" style="left:1783.9431163194445px;width:115.5px;text-align:center;top:422.68px;font-size:14px;line-height:14px;color:#454545;letter-spacing:-0.114px;">$6,634.00</div>
<div class="t" style="left:1901.5957236842105px;width:182.1px;text-align:center;top:422.68px;font-size:14px;line-height:14px;color:#4c9e9d;letter-spacing:0.191px;">Super Manufacturing</div>
<div class="t" style="left:324.6px;top:422.68px;font-size:14px;line-height:14px;color:#454545;letter-spacing:-0.128px;">56009</div>
<div class="t" style="left:414.4px;top:422.68px;font-size:14px;line-height:14px;color:#454545;letter-spacing:0.204px;">Component 9</div>
<div class="ab" style="left:2121.8px;top:423.53px;width:15.2px;height:15px;box-sizing:border-box;border:1.5px solid #8a8a8a;border-radius:3px;background:#fff"></div>
<div class="ab" style="left:2204.6px;top:423.53px;width:15.2px;height:15px;box-sizing:border-box;border:1.5px solid #8a8a8a;border-radius:3px;background:#fff"></div>
<div class="ab" style="left:667.5px;top:449.46px;width:71.7px;height:40.93px;background:#fd8282"></div>
<div class="ab" style="left:741.2px;top:449.46px;width:108.8px;height:40.93px;background:#fd8282"></div>
<div class="ab" style="left:87.4px;top:464.06px;width:15.2px;height:15px;box-sizing:border-box;border:1.5px solid #8a8a8a;border-radius:3px;background:#fff"></div>
<svg style="left:129px;top:463.16px" width="18" height="18" viewBox="0 0 18 18"><circle cx="9" cy="9" r="8.1" fill="#e6df35" stroke="#8a8232" stroke-width="1.5"/><ellipse cx="9" cy="5.6" rx="4.2" ry="2" fill="#f4ef80" opacity="0.6"/></svg>
<svg style="left:185px;top:465.46px" width="19" height="16" viewBox="0 0 19 16"><path d="M11 1.1 L3.2 1.1 Q0.7 1.1 0.7 3.6 L0.7 12.6 Q0.7 15.1 3.2 15.1 L12.3 15.1 Q14.8 15.1 14.8 12.6 L14.8 8" fill="none" stroke="#3e9898" stroke-width="1.5"/><path d="M6.2 13.4 L7.1 10.2 L16.3 1 L18.5 3.2 L9.3 12.4 Z" fill="#2a8f8f"/><path d="M15 2.3 L17.2 4.5" stroke="#fff" stroke-width="0.6" opacity="0.7"/></svg>
<div class="t" style="left:228.34375px;width:83.5px;text-align:center;top:463.31px;font-size:14px;line-height:14px;color:#454545;letter-spacing:0.088px;">N/A</div>
<div class="t" style="left:532.4811941964285px;width:133.0px;text-align:center;top:463.31px;font-size:14px;line-height:14px;color:#454545;letter-spacing:-0.038px;">Carslbad Plant</div>
<div class="t" style="left:667.483203125px;width:71.7px;text-align:center;top:463.31px;font-size:14px;line-height:14px;color:#454545;letter-spacing:-0.034px;">Make</div>
<div class="t" style="left:741.256640625px;width:108.8px;text-align:center;top:463.31px;font-size:14px;line-height:14px;color:#454545;letter-spacing:0.113px;">Urgent</div>
<div class="t" style="left:852.0291796875px;width:104.4px;text-align:center;top:463.31px;font-size:14px;line-height:14px;color:#454545;letter-spacing:0.058px;">SO26677 *</div>
<div class="t" style="left:958.4961647727273px;width:115.0px;text-align:center;top:463.31px;font-size:14px;line-height:14px;color:#454545;letter-spacing:0.192px;">Order Point</div>
<div class="t" style="left:1075.3640625px;width:139.3px;text-align:center;top:463.31px;font-size:14px;line-height:14px;color:#454545;letter-spacing:-0.072px;">Firm</div>
<div class="t" style="left:1286.0653645833333px;width:109.7px;text-align:center;top:463.31px;font-size:14px;line-height:14px;color:#454545;letter-spacing:0.131px;">Now</div>
<div class="t" style="left:1397.767396875px;width:109.5px;text-align:center;top:463.31px;font-size:14px;line-height:14px;color:#454545;letter-spacing:0.135px;">10/25/2021</div>
<div class="t" style="left:1509.266417421875px;width:109.1px;text-align:center;top:463.31px;font-size:14px;line-height:14px;color:#4c9e9d;letter-spacing:0.133px;">11/17/2021</div>
<div class="t" style="left:1620.2413411458333px;width:100.3px;text-align:center;top:463.31px;font-size:14px;line-height:14px;color:#4c9e9d;letter-spacing:-0.117px;">98,315</div>
<div class="t" style="left:1722.33203125px;width:59.4px;text-align:center;top:463.31px;font-size:14px;line-height:14px;color:#454545;letter-spacing:-0.536px;">ea</div>
<div class="t" style="left:1783.94240625px;width:115.5px;text-align:center;top:463.31px;font-size:14px;line-height:14px;color:#454545;letter-spacing:-0.115px;">$98,315.00</div>
<div class="t" style="left:1901.5475px;width:182.1px;text-align:center;top:463.31px;font-size:14px;line-height:14px;color:#4c9e9d;letter-spacing:0.095px;">Carslbad Plant*</div>
<div class="t" style="left:324.6px;top:463.31px;font-size:14px;line-height:14px;color:#454545;letter-spacing:-0.009px;">1201107</div>
<div class="t" style="left:414.4px;top:463.31px;font-size:14px;line-height:14px;color:#454545;letter-spacing:-0.050px;">Gadget 5</div>
<div class="ab" style="left:2121.8px;top:464.16px;width:15.2px;height:15px;box-sizing:border-box;border:1.5px solid #8a8a8a;border-radius:3px;background:#fff"></div>
<div class="ab" style="left:2204.6px;top:464.16px;width:15.2px;height:15px;box-sizing:border-box;border:1.5px solid #8a8a8a;border-radius:3px;background:#fff"></div>
<div class="ab" style="left:77.0px;top:490.09px;width:35.6px;height:40.63px;background:#f9f9f9"></div>
<div class="ab" style="left:114.6px;top:490.09px;width:45.7px;height:40.63px;background:#f9f9f9"></div>
<div class="ab" style="left:162.3px;top:490.09px;width:64.0px;height:40.63px;background:#f9f9f9"></div>
<div class="ab" style="left:228.3px;top:490.09px;width:83.5px;height:40.63px;background:#f9f9f9"></div>
<div class="ab" style="left:313.8px;top:490.09px;width:88.4px;height:40.63px;background:#f9f9f9"></div>
<div class="ab" style="left:404.2px;top:490.09px;width:126.3px;height:40.63px;background:#f9f9f9"></div>
<div class="ab" style="left:532.5px;top:490.09px;width:133.0px;height:40.63px;background:#f9f9f9"></div>
<div class="ab" style="left:667.5px;top:490.09px;width:71.7px;height:40.63px;background:#f9f9f9"></div>
<div class="ab" style="left:741.2px;top:490.09px;width:108.8px;height:40.63px;background:#f9f9f9"></div>
<div class="ab" style="left:852.0px;top:490.09px;width:104.4px;height:40.63px;background:#f9f9f9"></div>
<div class="ab" style="left:958.4px;top:490.09px;width:115.0px;height:40.63px;background:#f9f9f9"></div>
<div class="ab" style="left:1075.4px;top:490.09px;width:139.3px;height:40.63px;background:#f9f9f9"></div>
<div class="ab" style="left:1216.7px;top:490.09px;width:67.3px;height:40.63px;background:#f9f9f9"></div>
<div class="ab" style="left:1286.0px;top:490.09px;width:109.7px;height:40.63px;background:#f9f9f9"></div>
<div class="ab" style="left:1397.7px;top:490.09px;width:109.5px;height:40.63px;background:#f9f9f9"></div>
<div class="ab" style="left:1509.2px;top:490.09px;width:109.1px;height:40.63px;background:#f9f9f9"></div>
<div class="ab" style="left:1620.3px;top:490.09px;width:100.3px;height:40.63px;background:#f9f9f9"></div>
<div class="ab" style="left:1722.6px;top:490.09px;width:59.4px;height:40.63px;background:#f9f9f9"></div>
<div class="ab" style="left:1784.0px;top:490.09px;width:115.5px;height:40.63px;background:#f9f9f9"></div>
<div class="ab" style="left:1901.5px;top:490.09px;width:182.1px;height:40.63px;background:#f9f9f9"></div>
<div class="ab" style="left:2085.6px;top:490.09px;width:88.2px;height:40.63px;background:#f9f9f9"></div>
<div class="ab" style="left:2175.8px;top:490.09px;width:72.9px;height:40.63px;background:#f9f9f9"></div>
<div class="ab" style="left:2250.7px;top:490.09px;width:103.3px;height:40.63px;background:#f9f9f9"></div>
<div class="ab" style="left:667.5px;top:490.09px;width:71.7px;height:40.93px;background:#fd8282"></div>
<div class="ab" style="left:741.2px;top:490.09px;width:108.8px;height:40.93px;background:#fd8282"></div>
<div class="ab" style="left:87.4px;top:504.69px;width:15.2px;height:15px;box-sizing:border-box;border:1.5px solid #8a8a8a;border-radius:3px;background:#fff"></div>
<svg style="left:129px;top:503.79px" width="18" height="18" viewBox="0 0 18 18"><circle cx="9" cy="9" r="8.1" fill="#e6df35" stroke="#8a8232" stroke-width="1.5"/><ellipse cx="9" cy="5.6" rx="4.2" ry="2" fill="#f4ef80" opacity="0.6"/></svg>
<svg style="left:185px;top:506.09px" width="19" height="16" viewBox="0 0 19 16"><path d="M11 1.1 L3.2 1.1 Q0.7 1.1 0.7 3.6 L0.7 12.6 Q0.7 15.1 3.2 15.1 L12.3 15.1 Q14.8 15.1 14.8 12.6 L14.8 8" fill="none" stroke="#3e9898" stroke-width="1.5"/><path d="M6.2 13.4 L7.1 10.2 L16.3 1 L18.5 3.2 L9.3 12.4 Z" fill="#2a8f8f"/><path d="M15 2.3 L17.2 4.5" stroke="#fff" stroke-width="0.6" opacity="0.7"/></svg>
<div class="t" style="left:228.34375px;width:83.5px;text-align:center;top:503.94px;font-size:14px;line-height:14px;color:#454545;letter-spacing:0.088px;">N/A</div>
<div class="t" style="left:532.6904017857142px;width:133.0px;text-align:center;top:503.94px;font-size:14px;line-height:14px;color:#454545;letter-spacing:0.381px;">Detroit</div>
<div class="t" style="left:667.4294270833333px;width:71.7px;text-align:center;top:503.94px;font-size:14px;line-height:14px;color:#454545;letter-spacing:-0.141px;">Buy</div>
<div class="t" style="left:741.256640625px;width:108.8px;text-align:center;top:503.94px;font-size:14px;line-height:14px;color:#454545;letter-spacing:0.113px;">Urgent</div>
<div class="t" style="left:958.4961647727273px;width:115.0px;text-align:center;top:503.94px;font-size:14px;line-height:14px;color:#454545;letter-spacing:0.192px;">Order Point</div>
<div class="t" style="left:1075.3640625px;width:139.3px;text-align:center;top:503.94px;font-size:14px;line-height:14px;color:#454545;letter-spacing:-0.072px;">Firm</div>
<div class="t" style="left:1286.0653645833333px;width:109.7px;text-align:center;top:503.94px;font-size:14px;line-height:14px;color:#454545;letter-spacing:0.131px;">Now</div>
<div class="t" style="left:1397.767396875px;width:109.5px;text-align:center;top:503.94px;font-size:14px;line-height:14px;color:#454545;letter-spacing:0.135px;">01/30/2022</div>
<div class="t" style="left:1509.267396875px;width:109.1px;text-align:center;top:503.94px;font-size:14px;line-height:14px;color:#4c9e9d;letter-spacing:0.135px;">02/05/2022</div>
<div class="t" style="left:1620.2413411458333px;width:100.3px;text-align:center;top:503.94px;font-size:14px;line-height:14px;color:#4c9e9d;letter-spacing:-0.117px;">15,664</div>
<div class="t" style="left:1722.33203125px;width:59.4px;text-align:center;top:503.94px;font-size:14px;line-height:14px;color:#454545;letter-spacing:-0.536px;">ea</div>
<div class="t" style="left:1783.94240625px;width:115.5px;text-align:center;top:503.94px;font-size:14px;line-height:14px;color:#454545;letter-spacing:-0.115px;">$15,664.00</div>
<div class="t" style="left:1901.5957236842105px;width:182.1px;text-align:center;top:503.94px;font-size:14px;line-height:14px;color:#4c9e9d;letter-spacing:0.191px;">Super Manufacturing</div>
<div class="t" style="left:324.6px;top:503.94px;font-size:14px;line-height:14px;color:#454545;letter-spacing:-0.128px;">58760</div>
<div class="t" style="left:414.4px;top:503.94px;font-size:14px;line-height:14px;color:#454545;letter-spacing:0.059px;">Component 1</div>
<div class="ab" style="left:2121.8px;top:504.79px;width:15.2px;height:15px;box-sizing:border-box;border:1.5px solid #8a8a8a;border-radius:3px;background:#fff"></div>
<div class="ab" style="left:2204.6px;top:504.79px;width:15.2px;height:15px;box-sizing:border-box;border:1.5px solid #8a8a8a;border-radius:3px;background:#fff"></div>
<div class="ab" style="left:741.2px;top:530.72px;width:108.8px;height:40.93px;background:#fd8282"></div>
<svg style="left:129px;top:544.42px" width="18" height="18" viewBox="0 0 18 18"><circle cx="9" cy="9" r="8.1" fill="#e6df35" stroke="#8a8232" stroke-width="1.5"/><ellipse cx="9" cy="5.6" rx="4.2" ry="2" fill="#f4ef80" opacity="0.6"/></svg>
<svg style="left:185px;top:546.72px" width="19" height="16" viewBox="0 0 19 16"><path d="M11 1.1 L3.2 1.1 Q0.7 1.1 0.7 3.6 L0.7 12.6 Q0.7 15.1 3.2 15.1 L12.3 15.1 Q14.8 15.1 14.8 12.6 L14.8 8" fill="none" stroke="#3e9898" stroke-width="1.5"/><path d="M6.2 13.4 L7.1 10.2 L16.3 1 L18.5 3.2 L9.3 12.4 Z" fill="#2a8f8f"/><path d="M15 2.3 L17.2 4.5" stroke="#fff" stroke-width="0.6" opacity="0.7"/></svg>
<div class="t" style="left:228.34375px;width:83.5px;text-align:center;top:544.57px;font-size:14px;line-height:14px;color:#454545;letter-spacing:0.088px;">N/A</div>
<div class="t" style="left:532.6904017857142px;width:133.0px;text-align:center;top:544.57px;font-size:14px;line-height:14px;color:#454545;letter-spacing:0.381px;">Detroit</div>
<div class="t" style="left:667.61875px;width:71.7px;text-align:center;top:544.57px;font-size:14px;line-height:14px;color:#454545;letter-spacing:0.237px;">Other</div>
<div class="t" style="left:740.9829427083333px;width:108.8px;text-align:center;top:544.57px;font-size:14px;line-height:14px;color:#454545;letter-spacing:-0.434px;">Review</div>
<div class="t" style="left:851.87236328125px;width:104.4px;text-align:center;top:544.57px;font-size:14px;line-height:14px;color:#454545;letter-spacing:-0.255px;">PO000367</div>
<div class="t" style="left:958.3644965277778px;width:115.0px;text-align:center;top:544.57px;font-size:14px;line-height:14px;color:#454545;letter-spacing:-0.071px;">Stock-Out</div>
<div class="t" style="left:1075.3640625px;width:139.3px;text-align:center;top:544.57px;font-size:14px;line-height:14px;color:#454545;letter-spacing:-0.072px;">Firm</div>
<div class="t" style="left:1286.067396875px;width:109.7px;text-align:center;top:544.57px;font-size:14px;line-height:14px;color:#454545;letter-spacing:0.135px;">12/18/2021</div>
<div class="t" style="left:1397.767396875px;width:109.5px;text-align:center;top:544.57px;font-size:14px;line-height:14px;color:#454545;letter-spacing:0.135px;">12/18/2021</div>
<div class="t" style="left:1509.267396875px;width:109.1px;text-align:center;top:544.57px;font-size:14px;line-height:14px;color:#454545;letter-spacing:0.135px;">12/18/2021</div>
<div class="t" style="left:1620.2413411458333px;width:100.3px;text-align:center;top:544.57px;font-size:14px;line-height:14px;color:#454545;letter-spacing:-0.117px;">42,072</div>
<div class="t" style="left:1722.33203125px;width:59.4px;text-align:center;top:544.57px;font-size:14px;line-height:14px;color:#454545;letter-spacing:-0.536px;">ea</div>
<div class="t" style="left:1783.94240625px;width:115.5px;text-align:center;top:544.57px;font-size:14px;line-height:14px;color:#454545;letter-spacing:-0.115px;">$42,072.00</div>
<div class="t" style="left:1901.5957236842105px;width:182.1px;text-align:center;top:544.57px;font-size:14px;line-height:14px;color:#454545;letter-spacing:0.191px;">Super Manufacturing</div>
<div class="t" style="left:324.6px;top:544.57px;font-size:14px;line-height:14px;color:#454545;letter-spacing:-0.128px;">56009</div>
<div class="t" style="left:414.4px;top:544.57px;font-size:14px;line-height:14px;color:#454545;letter-spacing:0.204px;">Component 9</div>
<div class="ab" style="left:2204.6px;top:545.42px;width:15.2px;height:15px;box-sizing:border-box;border:1.5px solid #8a8a8a;border-radius:3px;background:#fff"></div>
<div class="ab" style="left:77.0px;top:571.35px;width:35.6px;height:40.63px;background:#f9f9f9"></div>
<div class="ab" style="left:114.6px;top:571.35px;width:45.7px;height:40.63px;background:#f9f9f9"></div>
<div class="ab" style="left:162.3px;top:571.35px;width:64.0px;height:40.63px;background:#f9f9f9"></div>
<div class="ab" style="left:228.3px;top:571.35px;width:83.5px;height:40.63px;background:#f9f9f9"></div>
<div class="ab" style="left:313.8px;top:571.35px;width:88.4px;height:40.63px;background:#f9f9f9"></div>
<div class="ab" style="left:404.2px;top:571.35px;width:126.3px;height:40.63px;background:#f9f9f9"></div>
<div class="ab" style="left:532.5px;top:571.35px;width:133.0px;height:40.63px;background:#f9f9f9"></div>
<div class="ab" style="left:667.5px;top:571.35px;width:71.7px;height:40.63px;background:#f9f9f9"></div>
<div class="ab" style="left:741.2px;top:571.35px;width:108.8px;height:40.63px;background:#f9f9f9"></div>
<div class="ab" style="left:852.0px;top:571.35px;width:104.4px;height:40.63px;background:#f9f9f9"></div>
<div class="ab" style="left:958.4px;top:571.35px;width:115.0px;height:40.63px;background:#f9f9f9"></div>
<div class="ab" style="left:1075.4px;top:571.35px;width:139.3px;height:40.63px;background:#f9f9f9"></div>
<div class="ab" style="left:1216.7px;top:571.35px;width:67.3px;height:40.63px;background:#f9f9f9"></div>
<div class="ab" style="left:1286.0px;top:571.35px;width:109.7px;height:40.63px;background:#f9f9f9"></div>
<div class="ab" style="left:1397.7px;top:571.35px;width:109.5px;height:40.63px;background:#f9f9f9"></div>
<div class="ab" style="left:1509.2px;top:571.35px;width:109.1px;height:40.63px;background:#f9f9f9"></div>
<div class="ab" style="left:1620.3px;top:571.35px;width:100.3px;height:40.63px;background:#f9f9f9"></div>
<div class="ab" style="left:1722.6px;top:571.35px;width:59.4px;height:40.63px;background:#f9f9f9"></div>
<div class="ab" style="left:1784.0px;top:571.35px;width:115.5px;height:40.63px;background:#f9f9f9"></div>
<div class="ab" style="left:1901.5px;top:571.35px;width:182.1px;height:40.63px;background:#f9f9f9"></div>
<div class="ab" style="left:2085.6px;top:571.35px;width:88.2px;height:40.63px;background:#f9f9f9"></div>
<div class="ab" style="left:2175.8px;top:571.35px;width:72.9px;height:40.63px;background:#f9f9f9"></div>
<div class="ab" style="left:2250.7px;top:571.35px;width:103.3px;height:40.63px;background:#f9f9f9"></div>
<svg style="left:129px;top:585.05px" width="18" height="18" viewBox="0 0 18 18"><defs><radialGradient id="gy"><stop offset="0" stop-color="#e4e13a"/><stop offset="0.45" stop-color="#cbe045"/><stop offset="1" stop-color="#78ad2e"/></radialGradient></defs><circle cx="9" cy="9" r="8.1" fill="url(#gy)" stroke="#4f7a22" stroke-width="1.6"/></svg>
<svg style="left:185px;top:587.35px" width="19" height="16" viewBox="0 0 19 16"><path d="M11 1.1 L3.2 1.1 Q0.7 1.1 0.7 3.6 L0.7 12.6 Q0.7 15.1 3.2 15.1 L12.3 15.1 Q14.8 15.1 14.8 12.6 L14.8 8" fill="none" stroke="#3e9898" stroke-width="1.5"/><path d="M6.2 13.4 L7.1 10.2 L16.3 1 L18.5 3.2 L9.3 12.4 Z" fill="#2a8f8f"/><path d="M15 2.3 L17.2 4.5" stroke="#fff" stroke-width="0.6" opacity="0.7"/></svg>
<div class="t" style="left:228.34375px;width:83.5px;text-align:center;top:585.20px;font-size:14px;line-height:14px;color:#454545;letter-spacing:0.088px;">N/A</div>
<div class="t" style="left:532.4811941964285px;width:133.0px;text-align:center;top:585.20px;font-size:14px;line-height:14px;color:#454545;letter-spacing:-0.038px;">Carslbad Plant</div>
<div class="t" style="left:667.61875px;width:71.7px;text-align:center;top:585.20px;font-size:14px;line-height:14px;color:#454545;letter-spacing:0.237px;">Other</div>
<div class="t" style="left:740.9829427083333px;width:108.8px;text-align:center;top:585.20px;font-size:14px;line-height:14px;color:#454545;letter-spacing:-0.434px;">Review</div>
<div class="t" style="left:851.9405133928572px;width:104.4px;text-align:center;top:585.20px;font-size:14px;line-height:14px;color:#454545;letter-spacing:-0.119px;">WO00168</div>
<div class="t" style="left:958.3129557291667px;width:115.0px;text-align:center;top:585.20px;font-size:14px;line-height:14px;color:#454545;letter-spacing:-0.174px;">Safety Stock</div>
<div class="t" style="left:1075.3640625px;width:139.3px;text-align:center;top:585.20px;font-size:14px;line-height:14px;color:#454545;letter-spacing:-0.072px;">Firm</div>
<div class="t" style="left:1286.067396875px;width:109.7px;text-align:center;top:585.20px;font-size:14px;line-height:14px;color:#454545;letter-spacing:0.135px;">12/25/2021</div>
<div class="t" style="left:1397.767396875px;width:109.5px;text-align:center;top:585.20px;font-size:14px;line-height:14px;color:#454545;letter-spacing:0.135px;">12/25/2021</div>
<div class="t" style="left:1509.267396875px;width:109.1px;text-align:center;top:585.20px;font-size:14px;line-height:14px;color:#454545;letter-spacing:0.135px;">12/25/2021</div>
<div class="t" style="left:1620.24240625px;width:100.3px;text-align:center;top:585.20px;font-size:14px;line-height:14px;color:#454545;letter-spacing:-0.115px;">5,536</div>
<div class="t" style="left:1722.33203125px;width:59.4px;text-align:center;top:585.20px;font-size:14px;line-height:14px;color:#454545;letter-spacing:-0.536px;">ea</div>
<div class="t" style="left:1783.9431163194445px;width:115.5px;text-align:center;top:585.20px;font-size:14px;line-height:14px;color:#454545;letter-spacing:-0.114px;">$5,536.00</div>
<div class="t" style="left:1901.5475px;width:182.1px;text-align:center;top:585.20px;font-size:14px;line-height:14px;color:#454545;letter-spacing:0.095px;">Carslbad Plant*</div>
<div class="t" style="left:2250.7479166666667px;width:103.3px;text-align:center;top:585.20px;font-size:14px;line-height:14px;color:#454545;letter-spacing:0.096px;">Program A</div>
<div class="t" style="left:324.6px;top:585.20px;font-size:14px;line-height:14px;color:#454545;letter-spacing:-0.128px;">96743</div>
<div class="t" style="left:414.4px;top:585.20px;font-size:14px;line-height:14px;color:#454545;letter-spacing:0.055px;">Gadget 4</div>
<div class="ab" style="left:2204.6px;top:586.05px;width:15.2px;height:15px;box-sizing:border-box;border:1.5px solid #8a8a8a;border-radius:3px;background:#fff"></div>
<div class="ab" style="left:741.2px;top:611.98px;width:108.8px;height:40.93px;background:#fd8282"></div>
<svg style="left:129px;top:625.68px" width="18" height="18" viewBox="0 0 18 18"><circle cx="9" cy="9" r="8.1" fill="#e6df35" stroke="#8a8232" stroke-width="1.5"/><ellipse cx="9" cy="5.6" rx="4.2" ry="2" fill="#f4ef80" opacity="0.6"/></svg>
<svg style="left:185px;top:627.98px" width="19" height="16" viewBox="0 0 19 16"><path d="M11 1.1 L3.2 1.1 Q0.7 1.1 0.7 3.6 L0.7 12.6 Q0.7 15.1 3.2 15.1 L12.3 15.1 Q14.8 15.1 14.8 12.6 L14.8 8" fill="none" stroke="#3e9898" stroke-width="1.5"/><path d="M6.2 13.4 L7.1 10.2 L16.3 1 L18.5 3.2 L9.3 12.4 Z" fill="#2a8f8f"/><path d="M15 2.3 L17.2 4.5" stroke="#fff" stroke-width="0.6" opacity="0.7"/></svg>
<div class="t" style="left:228.34375px;width:83.5px;text-align:center;top:625.83px;font-size:14px;line-height:14px;color:#454545;letter-spacing:0.088px;">N/A</div>
<div class="t" style="left:532.6904017857142px;width:133.0px;text-align:center;top:625.83px;font-size:14px;line-height:14px;color:#454545;letter-spacing:0.381px;">Detroit</div>
<div class="t" style="left:667.61875px;width:71.7px;text-align:center;top:625.83px;font-size:14px;line-height:14px;color:#454545;letter-spacing:0.237px;">Other</div>
<div class="t" style="left:740.9829427083333px;width:108.8px;text-align:center;top:625.83px;font-size:14px;line-height:14px;color:#454545;letter-spacing:-0.434px;">Review</div>
<div class="t" style="left:852.0321372070313px;width:104.4px;text-align:center;top:625.83px;font-size:14px;line-height:14px;color:#454545;letter-spacing:0.064px;">PO000368</div>
<div class="t" style="left:958.3644965277778px;width:115.0px;text-align:center;top:625.83px;font-size:14px;line-height:14px;color:#454545;letter-spacing:-0.071px;">Stock-Out</div>
<div class="t" style="left:1075.3640625px;width:139.3px;text-align:center;top:625.83px;font-size:14px;line-height:14px;color:#454545;letter-spacing:-0.072px;">Firm</div>
<div class="t" style="left:1286.067396875px;width:109.7px;text-align:center;top:625.83px;font-size:14px;line-height:14px;color:#454545;letter-spacing:0.135px;">02/12/2022</div>
<div class="t" style="left:1397.767396875px;width:109.5px;text-align:center;top:625.83px;font-size:14px;line-height:14px;color:#454545;letter-spacing:0.135px;">02/12/2022</div>
<div class="t" style="left:1509.267396875px;width:109.1px;text-align:center;top:625.83px;font-size:14px;line-height:14px;color:#454545;letter-spacing:0.135px;">02/12/2022</div>
<div class="t" style="left:1620.2413411458333px;width:100.3px;text-align:center;top:625.83px;font-size:14px;line-height:14px;color:#454545;letter-spacing:-0.117px;">42,840</div>
<div class="t" style="left:1722.33203125px;width:59.4px;text-align:center;top:625.83px;font-size:14px;line-height:14px;color:#454545;letter-spacing:-0.536px;">ea</div>
<div class="t" style="left:1783.94240625px;width:115.5px;text-align:center;top:625.83px;font-size:14px;line-height:14px;color:#454545;letter-spacing:-0.115px;">$42,840.00</div>
<div class="t" style="left:1901.5731770833333px;width:182.1px;text-align:center;top:625.83px;font-size:14px;line-height:14px;color:#454545;letter-spacing:0.146px;">Better Supplier</div>
<div class="t" style="left:324.6px;top:625.83px;font-size:14px;line-height:14px;color:#454545;letter-spacing:-0.128px;">50089</div>
<div class="t" style="left:414.4px;top:625.83px;font-size:14px;line-height:14px;color:#454545;letter-spacing:0.059px;">Component 4</div>
<div class="ab" style="left:2204.6px;top:626.68px;width:15.2px;height:15px;box-sizing:border-box;border:1.5px solid #8a8a8a;border-radius:3px;background:#fff"></div>
<div class="ab" style="left:77.0px;top:652.61px;width:35.6px;height:40.63px;background:#f9f9f9"></div>
<div class="ab" style="left:114.6px;top:652.61px;width:45.7px;height:40.63px;background:#f9f9f9"></div>
<div class="ab" style="left:162.3px;top:652.61px;width:64.0px;height:40.63px;background:#f9f9f9"></div>
<div class="ab" style="left:228.3px;top:652.61px;width:83.5px;height:40.63px;background:#f9f9f9"></div>
<div class="ab" style="left:313.8px;top:652.61px;width:88.4px;height:40.63px;background:#f9f9f9"></div>
<div class="ab" style="left:404.2px;top:652.61px;width:126.3px;height:40.63px;background:#f9f9f9"></div>
<div class="ab" style="left:532.5px;top:652.61px;width:133.0px;height:40.63px;background:#f9f9f9"></div>
<div class="ab" style="left:667.5px;top:652.61px;width:71.7px;height:40.63px;background:#f9f9f9"></div>
<div class="ab" style="left:741.2px;top:652.61px;width:108.8px;height:40.63px;background:#f9f9f9"></div>
<div class="ab" style="left:852.0px;top:652.61px;width:104.4px;height:40.63px;background:#f9f9f9"></div>
<div class="ab" style="left:958.4px;top:652.61px;width:115.0px;height:40.63px;background:#f9f9f9"></div>
<div class="ab" style="left:1075.4px;top:652.61px;width:139.3px;height:40.63px;background:#f9f9f9"></div>
<div class="ab" style="left:1216.7px;top:652.61px;width:67.3px;height:40.63px;background:#f9f9f9"></div>
<div class="ab" style="left:1286.0px;top:652.61px;width:109.7px;height:40.63px;background:#f9f9f9"></div>
<div class="ab" style="left:1397.7px;top:652.61px;width:109.5px;height:40.63px;background:#f9f9f9"></div>
<div class="ab" style="left:1509.2px;top:652.61px;width:109.1px;height:40.63px;background:#f9f9f9"></div>
<div class="ab" style="left:1620.3px;top:652.61px;width:100.3px;height:40.63px;background:#f9f9f9"></div>
<div class="ab" style="left:1722.6px;top:652.61px;width:59.4px;height:40.63px;background:#f9f9f9"></div>
<div class="ab" style="left:1784.0px;top:652.61px;width:115.5px;height:40.63px;background:#f9f9f9"></div>
<div class="ab" style="left:1901.5px;top:652.61px;width:182.1px;height:40.63px;background:#f9f9f9"></div>
<div class="ab" style="left:2085.6px;top:652.61px;width:88.2px;height:40.63px;background:#f9f9f9"></div>
<div class="ab" style="left:2175.8px;top:652.61px;width:72.9px;height:40.63px;background:#f9f9f9"></div>
<div class="ab" style="left:2250.7px;top:652.61px;width:103.3px;height:40.63px;background:#f9f9f9"></div>
<div class="ab" style="left:87.4px;top:667.21px;width:15.2px;height:15px;box-sizing:border-box;border:1.5px solid #8a8a8a;border-radius:3px;background:#fff"></div>
<svg style="left:129px;top:666.31px" width="18" height="18" viewBox="0 0 18 18"><circle cx="9" cy="9" r="8.1" fill="#e6df35" stroke="#8a8232" stroke-width="1.5"/><ellipse cx="9" cy="5.6" rx="4.2" ry="2" fill="#f4ef80" opacity="0.6"/></svg>
<svg style="left:185px;top:668.61px" width="19" height="16" viewBox="0 0 19 16"><path d="M11 1.1 L3.2 1.1 Q0.7 1.1 0.7 3.6 L0.7 12.6 Q0.7 15.1 3.2 15.1 L12.3 15.1 Q14.8 15.1 14.8 12.6 L14.8 8" fill="none" stroke="#3e9898" stroke-width="1.5"/><path d="M6.2 13.4 L7.1 10.2 L16.3 1 L18.5 3.2 L9.3 12.4 Z" fill="#2a8f8f"/><path d="M15 2.3 L17.2 4.5" stroke="#fff" stroke-width="0.6" opacity="0.7"/></svg>
<div class="t" style="left:228.34375px;width:83.5px;text-align:center;top:666.46px;font-size:14px;line-height:14px;color:#454545;letter-spacing:0.088px;">N/A</div>
<div class="t" style="left:532.6904017857142px;width:133.0px;text-align:center;top:666.46px;font-size:14px;line-height:14px;color:#454545;letter-spacing:0.381px;">Detroit</div>
<div class="t" style="left:667.4294270833333px;width:71.7px;text-align:center;top:666.46px;font-size:14px;line-height:14px;color:#454545;letter-spacing:-0.141px;">Buy</div>
<div class="t" style="left:741.3317708333334px;width:108.8px;text-align:center;top:666.46px;font-size:14px;line-height:14px;color:#454545;letter-spacing:0.264px;">Normal</div>
<div class="t" style="left:958.3129557291667px;width:115.0px;text-align:center;top:666.46px;font-size:14px;line-height:14px;color:#454545;letter-spacing:-0.174px;">Safety Stock</div>
<div class="t" style="left:1075.3640625px;width:139.3px;text-align:center;top:666.46px;font-size:14px;line-height:14px;color:#454545;letter-spacing:-0.072px;">Firm</div>
<div class="t" style="left:1286.0653645833333px;width:109.7px;text-align:center;top:666.46px;font-size:14px;line-height:14px;color:#454545;letter-spacing:0.131px;">Now</div>
<div class="t" style="left:1397.767396875px;width:109.5px;text-align:center;top:666.46px;font-size:14px;line-height:14px;color:#454545;letter-spacing:0.135px;">12/12/2021</div>
<div class="t" style="left:1509.267396875px;width:109.1px;text-align:center;top:666.46px;font-size:14px;line-height:14px;color:#4c9e9d;letter-spacing:0.135px;">02/05/2022</div>
<div class="t" style="left:1620.2405803571428px;width:100.3px;text-align:center;top:666.46px;font-size:14px;line-height:14px;color:#4c9e9d;letter-spacing:-0.119px;">165,371</div>
<div class="t" style="left:1722.33203125px;width:59.4px;text-align:center;top:666.46px;font-size:14px;line-height:14px;color:#454545;letter-spacing:-0.536px;">ea</div>
<div class="t" style="left:1783.941825284091px;width:115.5px;text-align:center;top:666.46px;font-size:14px;line-height:14px;color:#454545;letter-spacing:-0.116px;">$165,371.00</div>
<div class="t" style="left:1901.5957236842105px;width:182.1px;text-align:center;top:666.46px;font-size:14px;line-height:14px;color:#4c9e9d;letter-spacing:0.191px;">Super Manufacturing</div>
<div class="t" style="left:324.6px;top:666.46px;font-size:14px;line-height:14px;color:#454545;letter-spacing:-0.128px;">96743</div>
<div class="t" style="left:414.4px;top:666.46px;font-size:14px;line-height:14px;color:#454545;letter-spacing:0.055px;">Gadget 4</div>
<div class="ab" style="left:2121.8px;top:667.31px;width:15.2px;height:15px;box-sizing:border-box;border:1.5px solid #8a8a8a;border-radius:3px;background:#fff"></div>
<div class="ab" style="left:2204.6px;top:667.31px;width:15.2px;height:15px;box-sizing:border-box;border:1.5px solid #8a8a8a;border-radius:3px;background:#fff"></div>
<div class="ab" style="left:87.4px;top:707.84px;width:15.2px;height:15px;box-sizing:border-box;border:1.5px solid #8a8a8a;border-radius:3px;background:#fff"></div>
<svg style="left:129px;top:706.94px" width="18" height="18" viewBox="0 0 18 18"><defs><radialGradient id="gy"><stop offset="0" stop-color="#e4e13a"/><stop offset="0.45" stop-color="#cbe045"/><stop offset="1" stop-color="#78ad2e"/></radialGradient></defs><circle cx="9" cy="9" r="8.1" fill="url(#gy)" stroke="#4f7a22" stroke-width="1.6"/></svg>
<svg style="left:185px;top:709.24px" width="19" height="16" viewBox="0 0 19 16"><path d="M11 1.1 L3.2 1.1 Q0.7 1.1 0.7 3.6 L0.7 12.6 Q0.7 15.1 3.2 15.1 L12.3 15.1 Q14.8 15.1 14.8 12.6 L14.8 8" fill="none" stroke="#3e9898" stroke-width="1.5"/><path d="M6.2 13.4 L7.1 10.2 L16.3 1 L18.5 3.2 L9.3 12.4 Z" fill="#2a8f8f"/><path d="M15 2.3 L17.2 4.5" stroke="#fff" stroke-width="0.6" opacity="0.7"/></svg>
<div class="t" style="left:228.34375px;width:83.5px;text-align:center;top:707.09px;font-size:14px;line-height:14px;color:#454545;letter-spacing:0.088px;">N/A</div>
<div class="t" style="left:532.4811941964285px;width:133.0px;text-align:center;top:707.09px;font-size:14px;line-height:14px;color:#454545;letter-spacing:-0.038px;">Carslbad Plant</div>
<div class="t" style="left:667.483203125px;width:71.7px;text-align:center;top:707.09px;font-size:14px;line-height:14px;color:#454545;letter-spacing:-0.034px;">Make</div>
<div class="t" style="left:741.3317708333334px;width:108.8px;text-align:center;top:707.09px;font-size:14px;line-height:14px;color:#454545;letter-spacing:0.264px;">Normal</div>
<div class="t" style="left:958.3129557291667px;width:115.0px;text-align:center;top:707.09px;font-size:14px;line-height:14px;color:#454545;letter-spacing:-0.174px;">Safety Stock</div>
<div class="t" style="left:1075.3640625px;width:139.3px;text-align:center;top:707.09px;font-size:14px;line-height:14px;color:#454545;letter-spacing:-0.072px;">Firm</div>
<div class="t" style="left:1286.0653645833333px;width:109.7px;text-align:center;top:707.09px;font-size:14px;line-height:14px;color:#454545;letter-spacing:0.131px;">Now</div>
<div class="t" style="left:1397.767396875px;width:109.5px;text-align:center;top:707.09px;font-size:14px;line-height:14px;color:#454545;letter-spacing:0.135px;">12/25/2021</div>
<div class="t" style="left:1509.267396875px;width:109.1px;text-align:center;top:707.09px;font-size:14px;line-height:14px;color:#4c9e9d;letter-spacing:0.135px;">02/05/2022</div>
<div class="t" style="left:1620.2405803571428px;width:100.3px;text-align:center;top:707.09px;font-size:14px;line-height:14px;color:#4c9e9d;letter-spacing:-0.119px;">248,609</div>
<div class="t" style="left:1722.33203125px;width:59.4px;text-align:center;top:707.09px;font-size:14px;line-height:14px;color:#454545;letter-spacing:-0.536px;">ea</div>
<div class="t" style="left:1783.941825284091px;width:115.5px;text-align:center;top:707.09px;font-size:14px;line-height:14px;color:#454545;letter-spacing:-0.116px;">$248,609.00</div>
<div class="t" style="left:1901.5475px;width:182.1px;text-align:center;top:707.09px;font-size:14px;line-height:14px;color:#4c9e9d;letter-spacing:0.095px;">Carslbad Plant*</div>
<div class="t" style="left:2250.7479166666667px;width:103.3px;text-align:center;top:707.09px;font-size:14px;line-height:14px;color:#454545;letter-spacing:0.096px;">Program A</div>
<div class="t" style="left:324.6px;top:707.09px;font-size:14px;line-height:14px;color:#454545;letter-spacing:-0.128px;">96743</div>
<div class="t" style="left:414.4px;top:707.09px;font-size:14px;line-height:14px;color:#454545;letter-spacing:0.055px;">Gadget 4</div>
<div class="ab" style="left:2121.8px;top:707.94px;width:15.2px;height:15px;box-sizing:border-box;border:1.5px solid #8a8a8a;border-radius:3px;background:#fff"></div>
<div class="ab" style="left:2204.6px;top:707.94px;width:15.2px;height:15px;box-sizing:border-box;border:1.5px solid #8a8a8a;border-radius:3px;background:#fff"></div>
<div class="ab" style="left:77.0px;top:733.87px;width:35.6px;height:40.63px;background:#f9f9f9"></div>
<div class="ab" style="left:114.6px;top:733.87px;width:45.7px;height:40.63px;background:#f9f9f9"></div>
<div class="ab" style="left:162.3px;top:733.87px;width:64.0px;height:40.63px;background:#f9f9f9"></div>
<div class="ab" style="left:228.3px;top:733.87px;width:83.5px;height:40.63px;background:#f9f9f9"></div>
<div class="ab" style="left:313.8px;top:733.87px;width:88.4px;height:40.63px;background:#f9f9f9"></div>
<div class="ab" style="left:404.2px;top:733.87px;width:126.3px;height:40.63px;background:#f9f9f9"></div>
<div class="ab" style="left:532.5px;top:733.87px;width:133.0px;height:40.63px;background:#f9f9f9"></div>
<div class="ab" style="left:667.5px;top:733.87px;width:71.7px;height:40.63px;background:#f9f9f9"></div>
<div class="ab" style="left:741.2px;top:733.87px;width:108.8px;height:40.63px;background:#f9f9f9"></div>
<div class="ab" style="left:852.0px;top:733.87px;width:104.4px;height:40.63px;background:#f9f9f9"></div>
<div class="ab" style="left:958.4px;top:733.87px;width:115.0px;height:40.63px;background:#f9f9f9"></div>
<div class="ab" style="left:1075.4px;top:733.87px;width:139.3px;height:40.63px;background:#f9f9f9"></div>
<div class="ab" style="left:1216.7px;top:733.87px;width:67.3px;height:40.63px;background:#f9f9f9"></div>
<div class="ab" style="left:1286.0px;top:733.87px;width:109.7px;height:40.63px;background:#f9f9f9"></div>
<div class="ab" style="left:1397.7px;top:733.87px;width:109.5px;height:40.63px;background:#f9f9f9"></div>
<div class="ab" style="left:1509.2px;top:733.87px;width:109.1px;height:40.63px;background:#f9f9f9"></div>
<div class="ab" style="left:1620.3px;top:733.87px;width:100.3px;height:40.63px;background:#f9f9f9"></div>
<div class="ab" style="left:1722.6px;top:733.87px;width:59.4px;height:40.63px;background:#f9f9f9"></div>
<div class="ab" style="left:1784.0px;top:733.87px;width:115.5px;height:40.63px;background:#f9f9f9"></div>
<div class="ab" style="left:1901.5px;top:733.87px;width:182.1px;height:40.63px;background:#f9f9f9"></div>
<div class="ab" style="left:2085.6px;top:733.87px;width:88.2px;height:40.63px;background:#f9f9f9"></div>
<div class="ab" style="left:2175.8px;top:733.87px;width:72.9px;height:40.63px;background:#f9f9f9"></div>
<div class="ab" style="left:2250.7px;top:733.87px;width:103.3px;height:40.63px;background:#f9f9f9"></div>
<div class="ab" style="left:87.4px;top:748.47px;width:15.2px;height:15px;box-sizing:border-box;border:1.5px solid #8a8a8a;border-radius:3px;background:#fff"></div>
<svg style="left:129px;top:747.57px" width="18" height="18" viewBox="0 0 18 18"><circle cx="9" cy="9" r="8.1" fill="#8fc23e" stroke="#55792a" stroke-width="1.6"/><ellipse cx="9" cy="5.8" rx="4.2" ry="2" fill="#b5d870" opacity="0.5"/></svg>
<svg style="left:185px;top:749.87px" width="19" height="16" viewBox="0 0 19 16"><path d="M11 1.1 L3.2 1.1 Q0.7 1.1 0.7 3.6 L0.7 12.6 Q0.7 15.1 3.2 15.1 L12.3 15.1 Q14.8 15.1 14.8 12.6 L14.8 8" fill="none" stroke="#3e9898" stroke-width="1.5"/><path d="M6.2 13.4 L7.1 10.2 L16.3 1 L18.5 3.2 L9.3 12.4 Z" fill="#2a8f8f"/><path d="M15 2.3 L17.2 4.5" stroke="#fff" stroke-width="0.6" opacity="0.7"/></svg>
<div class="t" style="left:228.34375px;width:83.5px;text-align:center;top:747.72px;font-size:14px;line-height:14px;color:#454545;letter-spacing:0.088px;">N/A</div>
<div class="t" style="left:532.4811941964285px;width:133.0px;text-align:center;top:747.72px;font-size:14px;line-height:14px;color:#454545;letter-spacing:-0.038px;">Carslbad Plant</div>
<div class="t" style="left:667.483203125px;width:71.7px;text-align:center;top:747.72px;font-size:14px;line-height:14px;color:#454545;letter-spacing:-0.034px;">Make</div>
<div class="t" style="left:741.3317708333334px;width:108.8px;text-align:center;top:747.72px;font-size:14px;line-height:14px;color:#454545;letter-spacing:0.264px;">Normal</div>
<div class="t" style="left:852.0291796875px;width:104.4px;text-align:center;top:747.72px;font-size:14px;line-height:14px;color:#454545;letter-spacing:0.058px;">SO26686 *</div>
<div class="t" style="left:958.3129557291667px;width:115.0px;text-align:center;top:747.72px;font-size:14px;line-height:14px;color:#454545;letter-spacing:-0.174px;">Safety Stock</div>
<div class="t" style="left:1075.3640625px;width:139.3px;text-align:center;top:747.72px;font-size:14px;line-height:14px;color:#454545;letter-spacing:-0.072px;">Firm</div>
<div class="t" style="left:1286.0653645833333px;width:109.7px;text-align:center;top:747.72px;font-size:14px;line-height:14px;color:#454545;letter-spacing:0.131px;">Now</div>
<div class="t" style="left:1397.767396875px;width:109.5px;text-align:center;top:747.72px;font-size:14px;line-height:14px;color:#454545;letter-spacing:0.135px;">02/05/2022</div>
<div class="t" style="left:1509.267396875px;width:109.1px;text-align:center;top:747.72px;font-size:14px;line-height:14px;color:#4c9e9d;letter-spacing:0.135px;">02/05/2022</div>
<div class="t" style="left:1620.2413411458333px;width:100.3px;text-align:center;top:747.72px;font-size:14px;line-height:14px;color:#4c9e9d;letter-spacing:-0.117px;">27,468</div>
<div class="t" style="left:1722.33203125px;width:59.4px;text-align:center;top:747.72px;font-size:14px;line-height:14px;color:#454545;letter-spacing:-0.536px;">ea</div>
<div class="t" style="left:1783.94240625px;width:115.5px;text-align:center;top:747.72px;font-size:14px;line-height:14px;color:#454545;letter-spacing:-0.115px;">$27,468.00</div>
<div class="t" style="left:1901.5475px;width:182.1px;text-align:center;top:747.72px;font-size:14px;line-height:14px;color:#4c9e9d;letter-spacing:0.095px;">Carslbad Plant*</div>
<div class="t" style="left:324.6px;top:747.72px;font-size:14px;line-height:14px;color:#454545;letter-spacing:-0.128px;">85045</div>
<div class="t" style="left:414.4px;top:747.72px;font-size:14px;line-height:14px;color:#454545;letter-spacing:0.055px;">Gadget 3</div>
<div class="ab" style="left:2121.8px;top:748.57px;width:15.2px;height:15px;box-sizing:border-box;border:1.5px solid #8a8a8a;border-radius:3px;background:#fff"></div>
<div class="ab" style="left:2204.6px;top:748.57px;width:15.2px;height:15px;box-sizing:border-box;border:1.5px solid #8a8a8a;border-radius:3px;background:#fff"></div>
<div class="ab" style="left:87.4px;top:789.10px;width:15.2px;height:15px;box-sizing:border-box;border:1.5px solid #8a8a8a;border-radius:3px;background:#fff"></div>
<svg style="left:129px;top:788.20px" width="18" height="18" viewBox="0 0 18 18"><circle cx="9" cy="9" r="8.1" fill="#e6df35" stroke="#8a8232" stroke-width="1.5"/><ellipse cx="9" cy="5.6" rx="4.2" ry="2" fill="#f4ef80" opacity="0.6"/></svg>
<svg style="left:185px;top:790.50px" width="19" height="16" viewBox="0 0 19 16"><path d="M11 1.1 L3.2 1.1 Q0.7 1.1 0.7 3.6 L0.7 12.6 Q0.7 15.1 3.2 15.1 L12.3 15.1 Q14.8 15.1 14.8 12.6 L14.8 8" fill="none" stroke="#3e9898" stroke-width="1.5"/><path d="M6.2 13.4 L7.1 10.2 L16.3 1 L18.5 3.2 L9.3 12.4 Z" fill="#2a8f8f"/><path d="M15 2.3 L17.2 4.5" stroke="#fff" stroke-width="0.6" opacity="0.7"/></svg>
<div class="t" style="left:228.34375px;width:83.5px;text-align:center;top:788.35px;font-size:14px;line-height:14px;color:#454545;letter-spacing:0.088px;">N/A</div>
<div class="t" style="left:532.6904017857142px;width:133.0px;text-align:center;top:788.35px;font-size:14px;line-height:14px;color:#454545;letter-spacing:0.381px;">Detroit</div>
<div class="t" style="left:667.4294270833333px;width:71.7px;text-align:center;top:788.35px;font-size:14px;line-height:14px;color:#454545;letter-spacing:-0.141px;">Buy</div>
<div class="t" style="left:741.3317708333334px;width:108.8px;text-align:center;top:788.35px;font-size:14px;line-height:14px;color:#454545;letter-spacing:0.264px;">Normal</div>
<div class="t" style="left:958.3644965277778px;width:115.0px;text-align:center;top:788.35px;font-size:14px;line-height:14px;color:#454545;letter-spacing:-0.071px;">Stock-Out</div>
<div class="t" style="left:1075.3640625px;width:139.3px;text-align:center;top:788.35px;font-size:14px;line-height:14px;color:#454545;letter-spacing:-0.072px;">Firm</div>
<div class="t" style="left:1286.067396875px;width:109.7px;text-align:center;top:788.35px;font-size:14px;line-height:14px;color:#454545;letter-spacing:0.135px;">10/25/2021</div>
<div class="t" style="left:1397.767396875px;width:109.5px;text-align:center;top:788.35px;font-size:14px;line-height:14px;color:#454545;letter-spacing:0.135px;">03/12/2022</div>
<div class="t" style="left:1509.267396875px;width:109.1px;text-align:center;top:788.35px;font-size:14px;line-height:14px;color:#4c9e9d;letter-spacing:0.135px;">03/12/2022</div>
<div class="t" style="left:1620.2405803571428px;width:100.3px;text-align:center;top:788.35px;font-size:14px;line-height:14px;color:#4c9e9d;letter-spacing:-0.119px;">170,520</div>
<div class="t" style="left:1722.33203125px;width:59.4px;text-align:center;top:788.35px;font-size:14px;line-height:14px;color:#454545;letter-spacing:-0.536px;">ea</div>
<div class="t" style="left:1783.941825284091px;width:115.5px;text-align:center;top:788.35px;font-size:14px;line-height:14px;color:#454545;letter-spacing:-0.116px;">$170,520.00</div>
<div class="t" style="left:1901.5731770833333px;width:182.1px;text-align:center;top:788.35px;font-size:14px;line-height:14px;color:#4c9e9d;letter-spacing:0.146px;">Better Supplier</div>
<div class="t" style="left:324.6px;top:788.35px;font-size:14px;line-height:14px;color:#454545;letter-spacing:-0.128px;">50089</div>
<div class="t" style="left:414.4px;top:788.35px;font-size:14px;line-height:14px;color:#454545;letter-spacing:0.059px;">Component 4</div>
<div class="ab" style="left:2121.8px;top:789.20px;width:15.2px;height:15px;box-sizing:border-box;border:1.5px solid #8a8a8a;border-radius:3px;background:#fff"></div>
<div class="ab" style="left:2204.6px;top:789.20px;width:15.2px;height:15px;box-sizing:border-box;border:1.5px solid #8a8a8a;border-radius:3px;background:#fff"></div>
<div class="ab" style="left:77.0px;top:815.13px;width:35.6px;height:40.63px;background:#f9f9f9"></div>
<div class="ab" style="left:114.6px;top:815.13px;width:45.7px;height:40.63px;background:#f9f9f9"></div>
<div class="ab" style="left:162.3px;top:815.13px;width:64.0px;height:40.63px;background:#f9f9f9"></div>
<div class="ab" style="left:228.3px;top:815.13px;width:83.5px;height:40.63px;background:#f9f9f9"></div>
<div class="ab" style="left:313.8px;top:815.13px;width:88.4px;height:40.63px;background:#f9f9f9"></div>
<div class="ab" style="left:404.2px;top:815.13px;width:126.3px;height:40.63px;background:#f9f9f9"></div>
<div class="ab" style="left:532.5px;top:815.13px;width:133.0px;height:40.63px;background:#f9f9f9"></div>
<div class="ab" style="left:667.5px;top:815.13px;width:71.7px;height:40.63px;background:#f9f9f9"></div>
<div class="ab" style="left:741.2px;top:815.13px;width:108.8px;height:40.63px;background:#f9f9f9"></div>
<div class="ab" style="left:852.0px;top:815.13px;width:104.4px;height:40.63px;background:#f9f9f9"></div>
<div class="ab" style="left:958.4px;top:815.13px;width:115.0px;height:40.63px;background:#f9f9f9"></div>
<div class="ab" style="left:1075.4px;top:815.13px;width:139.3px;height:40.63px;background:#f9f9f9"></div>
<div class="ab" style="left:1216.7px;top:815.13px;width:67.3px;height:40.63px;background:#f9f9f9"></div>
<div class="ab" style="left:1286.0px;top:815.13px;width:109.7px;height:40.63px;background:#f9f9f9"></div>
<div class="ab" style="left:1397.7px;top:815.13px;width:109.5px;height:40.63px;background:#f9f9f9"></div>
<div class="ab" style="left:1509.2px;top:815.13px;width:109.1px;height:40.63px;background:#f9f9f9"></div>
<div class="ab" style="left:1620.3px;top:815.13px;width:100.3px;height:40.63px;background:#f9f9f9"></div>
<div class="ab" style="left:1722.6px;top:815.13px;width:59.4px;height:40.63px;background:#f9f9f9"></div>
<div class="ab" style="left:1784.0px;top:815.13px;width:115.5px;height:40.63px;background:#f9f9f9"></div>
<div class="ab" style="left:1901.5px;top:815.13px;width:182.1px;height:40.63px;background:#f9f9f9"></div>
<div class="ab" style="left:2085.6px;top:815.13px;width:88.2px;height:40.63px;background:#f9f9f9"></div>
<div class="ab" style="left:2175.8px;top:815.13px;width:72.9px;height:40.63px;background:#f9f9f9"></div>
<div class="ab" style="left:2250.7px;top:815.13px;width:103.3px;height:40.63px;background:#f9f9f9"></div>
<div class="ab" style="left:87.4px;top:829.73px;width:15.2px;height:15px;box-sizing:border-box;border:1.5px solid #8a8a8a;border-radius:3px;background:#fff"></div>
<svg style="left:129px;top:828.83px" width="18" height="18" viewBox="0 0 18 18"><circle cx="9" cy="9" r="8.1" fill="#8fc23e" stroke="#55792a" stroke-width="1.6"/><ellipse cx="9" cy="5.8" rx="4.2" ry="2" fill="#b5d870" opacity="0.5"/></svg>
<svg style="left:185px;top:831.13px" width="19" height="16" viewBox="0 0 19 16"><path d="M11 1.1 L3.2 1.1 Q0.7 1.1 0.7 3.6 L0.7 12.6 Q0.7 15.1 3.2 15.1 L12.3 15.1 Q14.8 15.1 14.8 12.6 L14.8 8" fill="none" stroke="#3e9898" stroke-width="1.5"/><path d="M6.2 13.4 L7.1 10.2 L16.3 1 L18.5 3.2 L9.3 12.4 Z" fill="#2a8f8f"/><path d="M15 2.3 L17.2 4.5" stroke="#fff" stroke-width="0.6" opacity="0.7"/></svg>
<div class="t" style="left:228.34375px;width:83.5px;text-align:center;top:828.98px;font-size:14px;line-height:14px;color:#454545;letter-spacing:0.088px;">N/A</div>
<div class="t" style="left:532.6904017857142px;width:133.0px;text-align:center;top:828.98px;font-size:14px;line-height:14px;color:#454545;letter-spacing:0.381px;">Detroit</div>
<div class="t" style="left:667.4294270833333px;width:71.7px;text-align:center;top:828.98px;font-size:14px;line-height:14px;color:#454545;letter-spacing:-0.141px;">Buy</div>
<div class="t" style="left:741.3317708333334px;width:108.8px;text-align:center;top:828.98px;font-size:14px;line-height:14px;color:#454545;letter-spacing:0.264px;">Normal</div>
<div class="t" style="left:958.3129557291667px;width:115.0px;text-align:center;top:828.98px;font-size:14px;line-height:14px;color:#454545;letter-spacing:-0.174px;">Safety Stock</div>
<div class="t" style="left:1075.3640625px;width:139.3px;text-align:center;top:828.98px;font-size:14px;line-height:14px;color:#454545;letter-spacing:-0.072px;">Firm</div>
<div class="t" style="left:1286.067396875px;width:109.7px;text-align:center;top:828.98px;font-size:14px;line-height:14px;color:#454545;letter-spacing:0.135px;">10/25/2021</div>
<div class="t" style="left:1397.767396875px;width:109.5px;text-align:center;top:828.98px;font-size:14px;line-height:14px;color:#454545;letter-spacing:0.135px;">02/06/2022</div>
<div class="t" style="left:1509.267396875px;width:109.1px;text-align:center;top:828.98px;font-size:14px;line-height:14px;color:#4c9e9d;letter-spacing:0.135px;">02/06/2022</div>
<div class="t" style="left:1620.2413411458333px;width:100.3px;text-align:center;top:828.98px;font-size:14px;line-height:14px;color:#4c9e9d;letter-spacing:-0.117px;">26,244</div>
<div class="t" style="left:1722.33203125px;width:59.4px;text-align:center;top:828.98px;font-size:14px;line-height:14px;color:#454545;letter-spacing:-0.536px;">ea</div>
<div class="t" style="left:1783.94240625px;width:115.5px;text-align:center;top:828.98px;font-size:14px;line-height:14px;color:#454545;letter-spacing:-0.115px;">$26,244.00</div>
<div class="t" style="left:1901.5957236842105px;width:182.1px;text-align:center;top:828.98px;font-size:14px;line-height:14px;color:#4c9e9d;letter-spacing:0.191px;">Super Manufacturing</div>
<div class="t" style="left:324.6px;top:828.98px;font-size:14px;line-height:14px;color:#454545;letter-spacing:-0.128px;">85045</div>
<div class="t" style="left:414.4px;top:828.98px;font-size:14px;line-height:14px;color:#454545;letter-spacing:0.055px;">Gadget 3</div>
<div class="ab" style="left:2121.8px;top:829.83px;width:15.2px;height:15px;box-sizing:border-box;border:1.5px solid #8a8a8a;border-radius:3px;background:#fff"></div>
<div class="ab" style="left:2204.6px;top:829.83px;width:15.2px;height:15px;box-sizing:border-box;border:1.5px solid #8a8a8a;border-radius:3px;background:#fff"></div>
<div class="ab" style="left:87.4px;top:870.36px;width:15.2px;height:15px;box-sizing:border-box;border:1.5px solid #8a8a8a;border-radius:3px;background:#fff"></div>
<svg style="left:129px;top:869.46px" width="18" height="18" viewBox="0 0 18 18"><circle cx="9" cy="9" r="8.1" fill="#e6df35" stroke="#8a8232" stroke-width="1.5"/><ellipse cx="9" cy="5.6" rx="4.2" ry="2" fill="#f4ef80" opacity="0.6"/></svg>
<svg style="left:185px;top:871.76px" width="19" height="16" viewBox="0 0 19 16"><path d="M11 1.1 L3.2 1.1 Q0.7 1.1 0.7 3.6 L0.7 12.6 Q0.7 15.1 3.2 15.1 L12.3 15.1 Q14.8 15.1 14.8 12.6 L14.8 8" fill="none" stroke="#3e9898" stroke-width="1.5"/><path d="M6.2 13.4 L7.1 10.2 L16.3 1 L18.5 3.2 L9.3 12.4 Z" fill="#2a8f8f"/><path d="M15 2.3 L17.2 4.5" stroke="#fff" stroke-width="0.6" opacity="0.7"/></svg>
<div class="t" style="left:228.34375px;width:83.5px;text-align:center;top:869.61px;font-size:14px;line-height:14px;color:#454545;letter-spacing:0.088px;">N/A</div>
<div class="t" style="left:532.6904017857142px;width:133.0px;text-align:center;top:869.61px;font-size:14px;line-height:14px;color:#454545;letter-spacing:0.381px;">Detroit</div>
<div class="t" style="left:667.4294270833333px;width:71.7px;text-align:center;top:869.61px;font-size:14px;line-height:14px;color:#454545;letter-spacing:-0.141px;">Buy</div>
<div class="t" style="left:741.3317708333334px;width:108.8px;text-align:center;top:869.61px;font-size:14px;line-height:14px;color:#454545;letter-spacing:0.264px;">Normal</div>
<div class="t" style="left:958.3644965277778px;width:115.0px;text-align:center;top:869.61px;font-size:14px;line-height:14px;color:#454545;letter-spacing:-0.071px;">Stock-Out</div>
<div class="t" style="left:1075.3640625px;width:139.3px;text-align:center;top:869.61px;font-size:14px;line-height:14px;color:#454545;letter-spacing:-0.072px;">Firm</div>
<div class="t" style="left:1286.067396875px;width:109.7px;text-align:center;top:869.61px;font-size:14px;line-height:14px;color:#454545;letter-spacing:0.135px;">10/25/2021</div>
<div class="t" style="left:1397.767396875px;width:109.5px;text-align:center;top:869.61px;font-size:14px;line-height:14px;color:#454545;letter-spacing:0.135px;">02/06/2022</div>
<div class="t" style="left:1509.267396875px;width:109.1px;text-align:center;top:869.61px;font-size:14px;line-height:14px;color:#4c9e9d;letter-spacing:0.135px;">02/06/2022</div>
<div class="t" style="left:1620.2413411458333px;width:100.3px;text-align:center;top:869.61px;font-size:14px;line-height:14px;color:#4c9e9d;letter-spacing:-0.117px;">20,916</div>
<div class="t" style="left:1722.33203125px;width:59.4px;text-align:center;top:869.61px;font-size:14px;line-height:14px;color:#454545;letter-spacing:-0.536px;">ea</div>
<div class="t" style="left:1783.94240625px;width:115.5px;text-align:center;top:869.61px;font-size:14px;line-height:14px;color:#454545;letter-spacing:-0.115px;">$20,916.00</div>
<div class="t" style="left:1901.5957236842105px;width:182.1px;text-align:center;top:869.61px;font-size:14px;line-height:14px;color:#4c9e9d;letter-spacing:0.191px;">Super Manufacturing</div>
<div class="t" style="left:324.6px;top:869.61px;font-size:14px;line-height:14px;color:#454545;letter-spacing:-0.128px;">58760</div>
<div class="t" style="left:414.4px;top:869.61px;font-size:14px;line-height:14px;color:#454545;letter-spacing:0.059px;">Component 1</div>
<div class="ab" style="left:2121.8px;top:870.46px;width:15.2px;height:15px;box-sizing:border-box;border:1.5px solid #8a8a8a;border-radius:3px;background:#fff"></div>
<div class="ab" style="left:2204.6px;top:870.46px;width:15.2px;height:15px;box-sizing:border-box;border:1.5px solid #8a8a8a;border-radius:3px;background:#fff"></div>
<div class="ab" style="left:77.0px;top:896.39px;width:35.6px;height:40.63px;background:#f9f9f9"></div>
<div class="ab" style="left:114.6px;top:896.39px;width:45.7px;height:40.63px;background:#f9f9f9"></div>
<div class="ab" style="left:162.3px;top:896.39px;width:64.0px;height:40.63px;background:#f9f9f9"></div>
<div class="ab" style="left:228.3px;top:896.39px;width:83.5px;height:40.63px;background:#f9f9f9"></div>
<div class="ab" style="left:313.8px;top:896.39px;width:88.4px;height:40.63px;background:#f9f9f9"></div>
<div class="ab" style="left:404.2px;top:896.39px;width:126.3px;height:40.63px;background:#f9f9f9"></div>
<div class="ab" style="left:532.5px;top:896.39px;width:133.0px;height:40.63px;background:#f9f9f9"></div>
<div class="ab" style="left:667.5px;top:896.39px;width:71.7px;height:40.63px;background:#f9f9f9"></div>
<div class="ab" style="left:741.2px;top:896.39px;width:108.8px;height:40.63px;background:#f9f9f9"></div>
<div class="ab" style="left:852.0px;top:896.39px;width:104.4px;height:40.63px;background:#f9f9f9"></div>
<div class="ab" style="left:958.4px;top:896.39px;width:115.0px;height:40.63px;background:#f9f9f9"></div>
<div class="ab" style="left:1075.4px;top:896.39px;width:139.3px;height:40.63px;background:#f9f9f9"></div>
<div class="ab" style="left:1216.7px;top:896.39px;width:67.3px;height:40.63px;background:#f9f9f9"></div>
<div class="ab" style="left:1286.0px;top:896.39px;width:109.7px;height:40.63px;background:#f9f9f9"></div>
<div class="ab" style="left:1397.7px;top:896.39px;width:109.5px;height:40.63px;background:#f9f9f9"></div>
<div class="ab" style="left:1509.2px;top:896.39px;width:109.1px;height:40.63px;background:#f9f9f9"></div>
<div class="ab" style="left:1620.3px;top:896.39px;width:100.3px;height:40.63px;background:#f9f9f9"></div>
<div class="ab" style="left:1722.6px;top:896.39px;width:59.4px;height:40.63px;background:#f9f9f9"></div>
<div class="ab" style="left:1784.0px;top:896.39px;width:115.5px;height:40.63px;background:#f9f9f9"></div>
<div class="ab" style="left:1901.5px;top:896.39px;width:182.1px;height:40.63px;background:#f9f9f9"></div>
<div class="ab" style="left:2085.6px;top:896.39px;width:88.2px;height:40.63px;background:#f9f9f9"></div>
<div class="ab" style="left:2175.8px;top:896.39px;width:72.9px;height:40.63px;background:#f9f9f9"></div>
<div class="ab" style="left:2250.7px;top:896.39px;width:103.3px;height:40.63px;background:#f9f9f9"></div>
<div class="ab" style="left:87.4px;top:910.99px;width:15.2px;height:15px;box-sizing:border-box;border:1.5px solid #8a8a8a;border-radius:3px;background:#fff"></div>
<svg style="left:129px;top:910.09px" width="18" height="18" viewBox="0 0 18 18"><defs><radialGradient id="gy"><stop offset="0" stop-color="#e4e13a"/><stop offset="0.45" stop-color="#cbe045"/><stop offset="1" stop-color="#78ad2e"/></radialGradient></defs><circle cx="9" cy="9" r="8.1" fill="url(#gy)" stroke="#4f7a22" stroke-width="1.6"/></svg>
<svg style="left:185px;top:912.39px" width="19" height="16" viewBox="0 0 19 16"><path d="M11 1.1 L3.2 1.1 Q0.7 1.1 0.7 3.6 L0.7 12.6 Q0.7 15.1 3.2 15.1 L12.3 15.1 Q14.8 15.1 14.8 12.6 L14.8 8" fill="none" stroke="#3e9898" stroke-width="1.5"/><path d="M6.2 13.4 L7.1 10.2 L16.3 1 L18.5 3.2 L9.3 12.4 Z" fill="#2a8f8f"/><path d="M15 2.3 L17.2 4.5" stroke="#fff" stroke-width="0.6" opacity="0.7"/></svg>
<div class="t" style="left:228.34375px;width:83.5px;text-align:center;top:910.24px;font-size:14px;line-height:14px;color:#454545;letter-spacing:0.088px;">N/A</div>
<div class="t" style="left:532.4811941964285px;width:133.0px;text-align:center;top:910.24px;font-size:14px;line-height:14px;color:#454545;letter-spacing:-0.038px;">Carslbad Plant</div>
<div class="t" style="left:667.483203125px;width:71.7px;text-align:center;top:910.24px;font-size:14px;line-height:14px;color:#454545;letter-spacing:-0.034px;">Make</div>
<div class="t" style="left:741.3317708333334px;width:108.8px;text-align:center;top:910.24px;font-size:14px;line-height:14px;color:#454545;letter-spacing:0.264px;">Normal</div>
<div class="t" style="left:958.3129557291667px;width:115.0px;text-align:center;top:910.24px;font-size:14px;line-height:14px;color:#454545;letter-spacing:-0.174px;">Safety Stock</div>
<div class="t" style="left:1075.3640625px;width:139.3px;text-align:center;top:910.24px;font-size:14px;line-height:14px;color:#454545;letter-spacing:-0.072px;">Firm</div>
<div class="t" style="left:1286.067396875px;width:109.7px;text-align:center;top:910.24px;font-size:14px;line-height:14px;color:#454545;letter-spacing:0.135px;">10/25/2021</div>
<div class="t" style="left:1397.767396875px;width:109.5px;text-align:center;top:910.24px;font-size:14px;line-height:14px;color:#454545;letter-spacing:0.135px;">02/06/2022</div>
<div class="t" style="left:1509.267396875px;width:109.1px;text-align:center;top:910.24px;font-size:14px;line-height:14px;color:#4c9e9d;letter-spacing:0.135px;">02/06/2022</div>
<div class="t" style="left:1620.2413411458333px;width:100.3px;text-align:center;top:910.24px;font-size:14px;line-height:14px;color:#4c9e9d;letter-spacing:-0.117px;">10,515</div>
<div class="t" style="left:1722.33203125px;width:59.4px;text-align:center;top:910.24px;font-size:14px;line-height:14px;color:#454545;letter-spacing:-0.536px;">ea</div>
<div class="t" style="left:1783.94240625px;width:115.5px;text-align:center;top:910.24px;font-size:14px;line-height:14px;color:#454545;letter-spacing:-0.115px;">$10,515.00</div>
<div class="t" style="left:1901.5475px;width:182.1px;text-align:center;top:910.24px;font-size:14px;line-height:14px;color:#4c9e9d;letter-spacing:0.095px;">Carslbad Plant*</div>
<div class="t" style="left:2250.7479166666667px;width:103.3px;text-align:center;top:910.24px;font-size:14px;line-height:14px;color:#454545;letter-spacing:0.096px;">Program A</div>
<div class="t" style="left:324.6px;top:910.24px;font-size:14px;line-height:14px;color:#454545;letter-spacing:-0.128px;">96743</div>
<div class="t" style="left:414.4px;top:910.24px;font-size:14px;line-height:14px;color:#454545;letter-spacing:0.055px;">Gadget 4</div>
<div class="ab" style="left:2121.8px;top:911.09px;width:15.2px;height:15px;box-sizing:border-box;border:1.5px solid #8a8a8a;border-radius:3px;background:#fff"></div>
<div class="ab" style="left:2204.6px;top:911.09px;width:15.2px;height:15px;box-sizing:border-box;border:1.5px solid #8a8a8a;border-radius:3px;background:#fff"></div>
<div class="ab" style="left:87.4px;top:951.62px;width:15.2px;height:15px;box-sizing:border-box;border:1.5px solid #8a8a8a;border-radius:3px;background:#fff"></div>
<svg style="left:129px;top:950.72px" width="18" height="18" viewBox="0 0 18 18"><circle cx="9" cy="9" r="8.1" fill="#e6df35" stroke="#8a8232" stroke-width="1.5"/><ellipse cx="9" cy="5.6" rx="4.2" ry="2" fill="#f4ef80" opacity="0.6"/></svg>
<svg style="left:185px;top:953.02px" width="19" height="16" viewBox="0 0 19 16"><path d="M11 1.1 L3.2 1.1 Q0.7 1.1 0.7 3.6 L0.7 12.6 Q0.7 15.1 3.2 15.1 L12.3 15.1 Q14.8 15.1 14.8 12.6 L14.8 8" fill="none" stroke="#3e9898" stroke-width="1.5"/><path d="M6.2 13.4 L7.1 10.2 L16.3 1 L18.5 3.2 L9.3 12.4 Z" fill="#2a8f8f"/><path d="M15 2.3 L17.2 4.5" stroke="#fff" stroke-width="0.6" opacity="0.7"/></svg>
<div class="t" style="left:228.34375px;width:83.5px;text-align:center;top:950.87px;font-size:14px;line-height:14px;color:#454545;letter-spacing:0.088px;">N/A</div>
<div class="t" style="left:532.6904017857142px;width:133.0px;text-align:center;top:950.87px;font-size:14px;line-height:14px;color:#454545;letter-spacing:0.381px;">Detroit</div>
<div class="t" style="left:667.4294270833333px;width:71.7px;text-align:center;top:950.87px;font-size:14px;line-height:14px;color:#454545;letter-spacing:-0.141px;">Buy</div>
<div class="t" style="left:741.3317708333334px;width:108.8px;text-align:center;top:950.87px;font-size:14px;line-height:14px;color:#454545;letter-spacing:0.264px;">Normal</div>
<div class="t" style="left:958.3129557291667px;width:115.0px;text-align:center;top:950.87px;font-size:14px;line-height:14px;color:#454545;letter-spacing:-0.174px;">Safety Stock</div>
<div class="t" style="left:1075.3640625px;width:139.3px;text-align:center;top:950.87px;font-size:14px;line-height:14px;color:#454545;letter-spacing:-0.072px;">Firm</div>
<div class="t" style="left:1286.067396875px;width:109.7px;text-align:center;top:950.87px;font-size:14px;line-height:14px;color:#454545;letter-spacing:0.135px;">10/25/2021</div>
<div class="t" style="left:1397.767396875px;width:109.5px;text-align:center;top:950.87px;font-size:14px;line-height:14px;color:#454545;letter-spacing:0.135px;">02/06/2022</div>
<div class="t" style="left:1509.267396875px;width:109.1px;text-align:center;top:950.87px;font-size:14px;line-height:14px;color:#4c9e9d;letter-spacing:0.135px;">02/06/2022</div>
<div class="t" style="left:1620.24240625px;width:100.3px;text-align:center;top:950.87px;font-size:14px;line-height:14px;color:#4c9e9d;letter-spacing:-0.115px;">1,079</div>
<div class="t" style="left:1722.33203125px;width:59.4px;text-align:center;top:950.87px;font-size:14px;line-height:14px;color:#454545;letter-spacing:-0.536px;">ea</div>
<div class="t" style="left:1783.9431163194445px;width:115.5px;text-align:center;top:950.87px;font-size:14px;line-height:14px;color:#454545;letter-spacing:-0.114px;">$1,079.00</div>
<div class="t" style="left:1901.5957236842105px;width:182.1px;text-align:center;top:950.87px;font-size:14px;line-height:14px;color:#4c9e9d;letter-spacing:0.191px;">Super Manufacturing</div>
<div class="t" style="left:324.6px;top:950.87px;font-size:14px;line-height:14px;color:#454545;letter-spacing:-0.128px;">96743</div>
<div class="t" style="left:414.4px;top:950.87px;font-size:14px;line-height:14px;color:#454545;letter-spacing:0.055px;">Gadget 4</div>
<div class="ab" style="left:2121.8px;top:951.72px;width:15.2px;height:15px;box-sizing:border-box;border:1.5px solid #8a8a8a;border-radius:3px;background:#fff"></div>
<div class="ab" style="left:2204.6px;top:951.72px;width:15.2px;height:15px;box-sizing:border-box;border:1.5px solid #8a8a8a;border-radius:3px;background:#fff"></div>
<div class="ab" style="left:77.0px;top:977.65px;width:35.6px;height:40.63px;background:#f9f9f9"></div>
<div class="ab" style="left:114.6px;top:977.65px;width:45.7px;height:40.63px;background:#f9f9f9"></div>
<div class="ab" style="left:162.3px;top:977.65px;width:64.0px;height:40.63px;background:#f9f9f9"></div>
<div class="ab" style="left:228.3px;top:977.65px;width:83.5px;height:40.63px;background:#f9f9f9"></div>
<div class="ab" style="left:313.8px;top:977.65px;width:88.4px;height:40.63px;background:#f9f9f9"></div>
<div class="ab" style="left:404.2px;top:977.65px;width:126.3px;height:40.63px;background:#f9f9f9"></div>
<div class="ab" style="left:532.5px;top:977.65px;width:133.0px;height:40.63px;background:#f9f9f9"></div>
<div class="ab" style="left:667.5px;top:977.65px;width:71.7px;height:40.63px;background:#f9f9f9"></div>
<div class="ab" style="left:741.2px;top:977.65px;width:108.8px;height:40.63px;background:#f9f9f9"></div>
<div class="ab" style="left:852.0px;top:977.65px;width:104.4px;height:40.63px;background:#f9f9f9"></div>
<div class="ab" style="left:958.4px;top:977.65px;width:115.0px;height:40.63px;background:#f9f9f9"></div>
<div class="ab" style="left:1075.4px;top:977.65px;width:139.3px;height:40.63px;background:#f9f9f9"></div>
<div class="ab" style="left:1216.7px;top:977.65px;width:67.3px;height:40.63px;background:#f9f9f9"></div>
<div class="ab" style="left:1286.0px;top:977.65px;width:109.7px;height:40.63px;background:#f9f9f9"></div>
<div class="ab" style="left:1397.7px;top:977.65px;width:109.5px;height:40.63px;background:#f9f9f9"></div>
<div class="ab" style="left:1509.2px;top:977.65px;width:109.1px;height:40.63px;background:#f9f9f9"></div>
<div class="ab" style="left:1620.3px;top:977.65px;width:100.3px;height:40.63px;background:#f9f9f9"></div>
<div class="ab" style="left:1722.6px;top:977.65px;width:59.4px;height:40.63px;background:#f9f9f9"></div>
<div class="ab" style="left:1784.0px;top:977.65px;width:115.5px;height:40.63px;background:#f9f9f9"></div>
<div class="ab" style="left:1901.5px;top:977.65px;width:182.1px;height:40.63px;background:#f9f9f9"></div>
<div class="ab" style="left:2085.6px;top:977.65px;width:88.2px;height:40.63px;background:#f9f9f9"></div>
<div class="ab" style="left:2175.8px;top:977.65px;width:72.9px;height:40.63px;background:#f9f9f9"></div>
<div class="ab" style="left:2250.7px;top:977.65px;width:103.3px;height:40.63px;background:#f9f9f9"></div>
<div class="ab" style="left:87.4px;top:992.25px;width:15.2px;height:15px;box-sizing:border-box;border:1.5px solid #8a8a8a;border-radius:3px;background:#fff"></div>
<svg style="left:129px;top:991.35px" width="18" height="18" viewBox="0 0 18 18"><circle cx="9" cy="9" r="8.1" fill="#e6df35" stroke="#8a8232" stroke-width="1.5"/><ellipse cx="9" cy="5.6" rx="4.2" ry="2" fill="#f4ef80" opacity="0.6"/></svg>
<svg style="left:185px;top:993.65px" width="19" height="16" viewBox="0 0 19 16"><path d="M11 1.1 L3.2 1.1 Q0.7 1.1 0.7 3.6 L0.7 12.6 Q0.7 15.1 3.2 15.1 L12.3 15.1 Q14.8 15.1 14.8 12.6 L14.8 8" fill="none" stroke="#3e9898" stroke-width="1.5"/><path d="M6.2 13.4 L7.1 10.2 L16.3 1 L18.5 3.2 L9.3 12.4 Z" fill="#2a8f8f"/><path d="M15 2.3 L17.2 4.5" stroke="#fff" stroke-width="0.6" opacity="0.7"/></svg>
<div class="t" style="left:228.34375px;width:83.5px;text-align:center;top:991.50px;font-size:14px;line-height:14px;color:#454545;letter-spacing:0.088px;">N/A</div>
<div class="t" style="left:532.4811941964285px;width:133.0px;text-align:center;top:991.50px;font-size:14px;line-height:14px;color:#454545;letter-spacing:-0.038px;">Carslbad Plant</div>
<div class="t" style="left:667.4294270833333px;width:71.7px;text-align:center;top:991.50px;font-size:14px;line-height:14px;color:#454545;letter-spacing:-0.141px;">Buy</div>
<div class="t" style="left:741.3317708333334px;width:108.8px;text-align:center;top:991.50px;font-size:14px;line-height:14px;color:#454545;letter-spacing:0.264px;">Normal</div>
<div class="t" style="left:958.3129557291667px;width:115.0px;text-align:center;top:991.50px;font-size:14px;line-height:14px;color:#454545;letter-spacing:-0.174px;">Safety Stock</div>
<div class="t" style="left:1075.3640625px;width:139.3px;text-align:center;top:991.50px;font-size:14px;line-height:14px;color:#454545;letter-spacing:-0.072px;">Firm</div>
<div class="t" style="left:1286.067396875px;width:109.7px;text-align:center;top:991.50px;font-size:14px;line-height:14px;color:#454545;letter-spacing:0.135px;">10/25/2021</div>
<div class="t" style="left:1397.767396875px;width:109.5px;text-align:center;top:991.50px;font-size:14px;line-height:14px;color:#454545;letter-spacing:0.135px;">02/06/2022</div>
<div class="t" style="left:1509.267396875px;width:109.1px;text-align:center;top:991.50px;font-size:14px;line-height:14px;color:#4c9e9d;letter-spacing:0.135px;">02/06/2022</div>
<div class="t" style="left:1620.236015625px;width:100.3px;text-align:center;top:991.50px;font-size:14px;line-height:14px;color:#4c9e9d;letter-spacing:-0.128px;">943</div>
<div class="t" style="left:1722.33203125px;width:59.4px;text-align:center;top:991.50px;font-size:14px;line-height:14px;color:#454545;letter-spacing:-0.536px;">ea</div>
<div class="t" style="left:1783.9405803571428px;width:115.5px;text-align:center;top:991.50px;font-size:14px;line-height:14px;color:#454545;letter-spacing:-0.119px;">$943.00</div>
<div class="t" style="left:1901.5731770833333px;width:182.1px;text-align:center;top:991.50px;font-size:14px;line-height:14px;color:#4c9e9d;letter-spacing:0.146px;">Better Supplier</div>
<div class="t" style="left:324.6px;top:991.50px;font-size:14px;line-height:14px;color:#454545;letter-spacing:-0.226px;">65758</div>
<div class="t" style="left:414.4px;top:991.50px;font-size:14px;line-height:14px;color:#454545;letter-spacing:0.032px;">Widget 6</div>
<div class="ab" style="left:2121.8px;top:992.35px;width:15.2px;height:15px;box-sizing:border-box;border:1.5px solid #8a8a8a;border-radius:3px;background:#fff"></div>
<div class="ab" style="left:2204.6px;top:992.35px;width:15.2px;height:15px;box-sizing:border-box;border:1.5px solid #8a8a8a;border-radius:3px;background:#fff"></div>
<div class="ab" style="left:87.4px;top:1032.88px;width:15.2px;height:15px;box-sizing:border-box;border:1.5px solid #8a8a8a;border-radius:3px;background:#fff"></div>
<svg style="left:129px;top:1031.98px" width="18" height="18" viewBox="0 0 18 18"><defs><radialGradient id="gy"><stop offset="0" stop-color="#e4e13a"/><stop offset="0.45" stop-color="#cbe045"/><stop offset="1" stop-color="#78ad2e"/></radialGradient></defs><circle cx="9" cy="9" r="8.1" fill="url(#gy)" stroke="#4f7a22" stroke-width="1.6"/></svg>
<svg style="left:185px;top:1034.28px" width="19" height="16" viewBox="0 0 19 16"><path d="M11 1.1 L3.2 1.1 Q0.7 1.1 0.7 3.6 L0.7 12.6 Q0.7 15.1 3.2 15.1 L12.3 15.1 Q14.8 15.1 14.8 12.6 L14.8 8" fill="none" stroke="#3e9898" stroke-width="1.5"/><path d="M6.2 13.4 L7.1 10.2 L16.3 1 L18.5 3.2 L9.3 12.4 Z" fill="#2a8f8f"/><path d="M15 2.3 L17.2 4.5" stroke="#fff" stroke-width="0.6" opacity="0.7"/></svg>
<div class="t" style="left:228.34375px;width:83.5px;text-align:center;top:1032.13px;font-size:14px;line-height:14px;color:#454545;letter-spacing:0.088px;">N/A</div>
<div class="t" style="left:532.4811941964285px;width:133.0px;text-align:center;top:1032.13px;font-size:14px;line-height:14px;color:#454545;letter-spacing:-0.038px;">Carslbad Plant</div>
<div class="t" style="left:667.483203125px;width:71.7px;text-align:center;top:1032.13px;font-size:14px;line-height:14px;color:#454545;letter-spacing:-0.034px;">Make</div>
<div class="t" style="left:741.3317708333334px;width:108.8px;text-align:center;top:1032.13px;font-size:14px;line-height:14px;color:#454545;letter-spacing:0.264px;">Normal</div>
<div class="t" style="left:958.3129557291667px;width:115.0px;text-align:center;top:1032.13px;font-size:14px;line-height:14px;color:#454545;letter-spacing:-0.174px;">Safety Stock</div>
<div class="t" style="left:1075.3640625px;width:139.3px;text-align:center;top:1032.13px;font-size:14px;line-height:14px;color:#454545;letter-spacing:-0.072px;">Firm</div>
<div class="t" style="left:1286.067396875px;width:109.7px;text-align:center;top:1032.13px;font-size:14px;line-height:14px;color:#454545;letter-spacing:0.135px;">10/26/2021</div>
<div class="t" style="left:1397.767396875px;width:109.5px;text-align:center;top:1032.13px;font-size:14px;line-height:14px;color:#454545;letter-spacing:0.135px;">02/07/2022</div>
<div class="t" style="left:1509.267396875px;width:109.1px;text-align:center;top:1032.13px;font-size:14px;line-height:14px;color:#4c9e9d;letter-spacing:0.135px;">02/07/2022</div>
<div class="t" style="left:1620.2413411458333px;width:100.3px;text-align:center;top:1032.13px;font-size:14px;line-height:14px;color:#4c9e9d;letter-spacing:-0.117px;">10,516</div>
<div class="t" style="left:1722.33203125px;width:59.4px;text-align:center;top:1032.13px;font-size:14px;line-height:14px;color:#454545;letter-spacing:-0.536px;">ea</div>
<div class="t" style="left:1783.94240625px;width:115.5px;text-align:center;top:1032.13px;font-size:14px;line-height:14px;color:#454545;letter-spacing:-0.115px;">$10,516.00</div>
<div class="t" style="left:1901.5475px;width:182.1px;text-align:center;top:1032.13px;font-size:14px;line-height:14px;color:#4c9e9d;letter-spacing:0.095px;">Carslbad Plant*</div>
<div class="t" style="left:2250.7479166666667px;width:103.3px;text-align:center;top:1032.13px;font-size:14px;line-height:14px;color:#454545;letter-spacing:0.096px;">Program A</div>
<div class="t" style="left:324.6px;top:1032.13px;font-size:14px;line-height:14px;color:#454545;letter-spacing:-0.128px;">96743</div>
<div class="t" style="left:414.4px;top:1032.13px;font-size:14px;line-height:14px;color:#454545;letter-spacing:0.055px;">Gadget 4</div>
<div class="ab" style="left:2121.8px;top:1032.98px;width:15.2px;height:15px;box-sizing:border-box;border:1.5px solid #8a8a8a;border-radius:3px;background:#fff"></div>
<div class="ab" style="left:2204.6px;top:1032.98px;width:15.2px;height:15px;box-sizing:border-box;border:1.5px solid #8a8a8a;border-radius:3px;background:#fff"></div>
<div class="ab" style="left:77.0px;top:1058.91px;width:35.6px;height:40.63px;background:#f9f9f9"></div>
<div class="ab" style="left:114.6px;top:1058.91px;width:45.7px;height:40.63px;background:#f9f9f9"></div>
<div class="ab" style="left:162.3px;top:1058.91px;width:64.0px;height:40.63px;background:#f9f9f9"></div>
<div class="ab" style="left:228.3px;top:1058.91px;width:83.5px;height:40.63px;background:#f9f9f9"></div>
<div class="ab" style="left:313.8px;top:1058.91px;width:88.4px;height:40.63px;background:#f9f9f9"></div>
<div class="ab" style="left:404.2px;top:1058.91px;width:126.3px;height:40.63px;background:#f9f9f9"></div>
<div class="ab" style="left:532.5px;top:1058.91px;width:133.0px;height:40.63px;background:#f9f9f9"></div>
<div class="ab" style="left:667.5px;top:1058.91px;width:71.7px;height:40.63px;background:#f9f9f9"></div>
<div class="ab" style="left:741.2px;top:1058.91px;width:108.8px;height:40.63px;background:#f9f9f9"></div>
<div class="ab" style="left:852.0px;top:1058.91px;width:104.4px;height:40.63px;background:#f9f9f9"></div>
<div class="ab" style="left:958.4px;top:1058.91px;width:115.0px;height:40.63px;background:#f9f9f9"></div>
<div class="ab" style="left:1075.4px;top:1058.91px;width:139.3px;height:40.63px;background:#f9f9f9"></div>
<div class="ab" style="left:1216.7px;top:1058.91px;width:67.3px;height:40.63px;background:#f9f9f9"></div>
<div class="ab" style="left:1286.0px;top:1058.91px;width:109.7px;height:40.63px;background:#f9f9f9"></div>
<div class="ab" style="left:1397.7px;top:1058.91px;width:109.5px;height:40.63px;background:#f9f9f9"></div>
<div class="ab" style="left:1509.2px;top:1058.91px;width:109.1px;height:40.63px;background:#f9f9f9"></div>
<div class="ab" style="left:1620.3px;top:1058.91px;width:100.3px;height:40.63px;background:#f9f9f9"></div>
<div class="ab" style="left:1722.6px;top:1058.91px;width:59.4px;height:40.63px;background:#f9f9f9"></div>
<div class="ab" style="left:1784.0px;top:1058.91px;width:115.5px;height:40.63px;background:#f9f9f9"></div>
<div class="ab" style="left:1901.5px;top:1058.91px;width:182.1px;height:40.63px;background:#f9f9f9"></div>
<div class="ab" style="left:2085.6px;top:1058.91px;width:88.2px;height:40.63px;background:#f9f9f9"></div>
<div class="ab" style="left:2175.8px;top:1058.91px;width:72.9px;height:40.63px;background:#f9f9f9"></div>
<div class="ab" style="left:2250.7px;top:1058.91px;width:103.3px;height:40.63px;background:#f9f9f9"></div>
<div class="ab" style="left:87.4px;top:1073.51px;width:15.2px;height:15px;box-sizing:border-box;border:1.5px solid #8a8a8a;border-radius:3px;background:#fff"></div>
<svg style="left:129px;top:1072.61px" width="18" height="18" viewBox="0 0 18 18"><circle cx="9" cy="9" r="8.1" fill="#e6df35" stroke="#8a8232" stroke-width="1.5"/><ellipse cx="9" cy="5.6" rx="4.2" ry="2" fill="#f4ef80" opacity="0.6"/></svg>
<svg style="left:185px;top:1074.91px" width="19" height="16" viewBox="0 0 19 16"><path d="M11 1.1 L3.2 1.1 Q0.7 1.1 0.7 3.6 L0.7 12.6 Q0.7 15.1 3.2 15.1 L12.3 15.1 Q14.8 15.1 14.8 12.6 L14.8 8" fill="none" stroke="#3e9898" stroke-width="1.5"/><path d="M6.2 13.4 L7.1 10.2 L16.3 1 L18.5 3.2 L9.3 12.4 Z" fill="#2a8f8f"/><path d="M15 2.3 L17.2 4.5" stroke="#fff" stroke-width="0.6" opacity="0.7"/></svg>
<div class="t" style="left:228.34375px;width:83.5px;text-align:center;top:1072.76px;font-size:14px;line-height:14px;color:#454545;letter-spacing:0.088px;">N/A</div>
<div class="t" style="left:532.6904017857142px;width:133.0px;text-align:center;top:1072.76px;font-size:14px;line-height:14px;color:#454545;letter-spacing:0.381px;">Detroit</div>
<div class="t" style="left:667.4294270833333px;width:71.7px;text-align:center;top:1072.76px;font-size:14px;line-height:14px;color:#454545;letter-spacing:-0.141px;">Buy</div>
<div class="t" style="left:741.3317708333334px;width:108.8px;text-align:center;top:1072.76px;font-size:14px;line-height:14px;color:#454545;letter-spacing:0.264px;">Normal</div>
<div class="t" style="left:958.3129557291667px;width:115.0px;text-align:center;top:1072.76px;font-size:14px;line-height:14px;color:#454545;letter-spacing:-0.174px;">Safety Stock</div>
<div class="t" style="left:1075.3640625px;width:139.3px;text-align:center;top:1072.76px;font-size:14px;line-height:14px;color:#454545;letter-spacing:-0.072px;">Firm</div>
<div class="t" style="left:1286.067396875px;width:109.7px;text-align:center;top:1072.76px;font-size:14px;line-height:14px;color:#454545;letter-spacing:0.135px;">10/26/2021</div>
<div class="t" style="left:1397.767396875px;width:109.5px;text-align:center;top:1072.76px;font-size:14px;line-height:14px;color:#454545;letter-spacing:0.135px;">02/07/2022</div>
<div class="t" style="left:1509.267396875px;width:109.1px;text-align:center;top:1072.76px;font-size:14px;line-height:14px;color:#4c9e9d;letter-spacing:0.135px;">02/07/2022</div>
<div class="t" style="left:1620.24240625px;width:100.3px;text-align:center;top:1072.76px;font-size:14px;line-height:14px;color:#4c9e9d;letter-spacing:-0.115px;">1,081</div>
<div class="t" style="left:1722.33203125px;width:59.4px;text-align:center;top:1072.76px;font-size:14px;line-height:14px;color:#454545;letter-spacing:-0.536px;">ea</div>
<div class="t" style="left:1783.9431163194445px;width:115.5px;text-align:center;top:1072.76px;font-size:14px;line-height:14px;color:#454545;letter-spacing:-0.114px;">$1,081.00</div>
<div class="t" style="left:1901.5957236842105px;width:182.1px;text-align:center;top:1072.76px;font-size:14px;line-height:14px;color:#4c9e9d;letter-spacing:0.191px;">Super Manufacturing</div>
<div class="t" style="left:324.6px;top:1072.76px;font-size:14px;line-height:14px;color:#454545;letter-spacing:-0.128px;">96743</div>
<div class="t" style="left:414.4px;top:1072.76px;font-size:14px;line-height:14px;color:#454545;letter-spacing:0.055px;">Gadget 4</div>
<div class="ab" style="left:2121.8px;top:1073.61px;width:15.2px;height:15px;box-sizing:border-box;border:1.5px solid #8a8a8a;border-radius:3px;background:#fff"></div>
<div class="ab" style="left:2204.6px;top:1073.61px;width:15.2px;height:15px;box-sizing:border-box;border:1.5px solid #8a8a8a;border-radius:3px;background:#fff"></div>
<div class="ab" style="left:87.4px;top:1114.14px;width:15.2px;height:15px;box-sizing:border-box;border:1.5px solid #8a8a8a;border-radius:3px;background:#fff"></div>
<svg style="left:129px;top:1113.24px" width="18" height="18" viewBox="0 0 18 18"><circle cx="9" cy="9" r="8.1" fill="#e6df35" stroke="#8a8232" stroke-width="1.5"/><ellipse cx="9" cy="5.6" rx="4.2" ry="2" fill="#f4ef80" opacity="0.6"/></svg>
<svg style="left:185px;top:1115.54px" width="19" height="16" viewBox="0 0 19 16"><path d="M11 1.1 L3.2 1.1 Q0.7 1.1 0.7 3.6 L0.7 12.6 Q0.7 15.1 3.2 15.1 L12.3 15.1 Q14.8 15.1 14.8 12.6 L14.8 8" fill="none" stroke="#3e9898" stroke-width="1.5"/><path d="M6.2 13.4 L7.1 10.2 L16.3 1 L18.5 3.2 L9.3 12.4 Z" fill="#2a8f8f"/><path d="M15 2.3 L17.2 4.5" stroke="#fff" stroke-width="0.6" opacity="0.7"/></svg>
<div class="t" style="left:228.34375px;width:83.5px;text-align:center;top:1113.39px;font-size:14px;line-height:14px;color:#454545;letter-spacing:0.088px;">N/A</div>
<div class="t" style="left:532.4811941964285px;width:133.0px;text-align:center;top:1113.39px;font-size:14px;line-height:14px;color:#454545;letter-spacing:-0.038px;">Carslbad Plant</div>
<div class="t" style="left:667.4294270833333px;width:71.7px;text-align:center;top:1113.39px;font-size:14px;line-height:14px;color:#454545;letter-spacing:-0.141px;">Buy</div>
<div class="t" style="left:741.3317708333334px;width:108.8px;text-align:center;top:1113.39px;font-size:14px;line-height:14px;color:#454545;letter-spacing:0.264px;">Normal</div>
<div class="t" style="left:958.3129557291667px;width:115.0px;text-align:center;top:1113.39px;font-size:14px;line-height:14px;color:#454545;letter-spacing:-0.174px;">Safety Stock</div>
<div class="t" style="left:1075.3640625px;width:139.3px;text-align:center;top:1113.39px;font-size:14px;line-height:14px;color:#454545;letter-spacing:-0.072px;">Firm</div>
<div class="t" style="left:1286.067396875px;width:109.7px;text-align:center;top:1113.39px;font-size:14px;line-height:14px;color:#454545;letter-spacing:0.135px;">10/26/2021</div>
<div class="t" style="left:1397.767396875px;width:109.5px;text-align:center;top:1113.39px;font-size:14px;line-height:14px;color:#454545;letter-spacing:0.135px;">02/07/2022</div>
<div class="t" style="left:1509.267396875px;width:109.1px;text-align:center;top:1113.39px;font-size:14px;line-height:14px;color:#4c9e9d;letter-spacing:0.135px;">02/07/2022</div>
<div class="t" style="left:1620.236015625px;width:100.3px;text-align:center;top:1113.39px;font-size:14px;line-height:14px;color:#4c9e9d;letter-spacing:-0.128px;">943</div>
<div class="t" style="left:1722.33203125px;width:59.4px;text-align:center;top:1113.39px;font-size:14px;line-height:14px;color:#454545;letter-spacing:-0.536px;">ea</div>
<div class="t" style="left:1783.9405803571428px;width:115.5px;text-align:center;top:1113.39px;font-size:14px;line-height:14px;color:#454545;letter-spacing:-0.119px;">$943.00</div>
<div class="t" style="left:1901.5731770833333px;width:182.1px;text-align:center;top:1113.39px;font-size:14px;line-height:14px;color:#4c9e9d;letter-spacing:0.146px;">Better Supplier</div>
<div class="t" style="left:324.6px;top:1113.39px;font-size:14px;line-height:14px;color:#454545;letter-spacing:-0.226px;">65758</div>
<div class="t" style="left:414.4px;top:1113.39px;font-size:14px;line-height:14px;color:#454545;letter-spacing:0.032px;">Widget 6</div>
<div class="ab" style="left:2121.8px;top:1114.24px;width:15.2px;height:15px;box-sizing:border-box;border:1.5px solid #8a8a8a;border-radius:3px;background:#fff"></div>
<div class="ab" style="left:2204.6px;top:1114.24px;width:15.2px;height:15px;box-sizing:border-box;border:1.5px solid #8a8a8a;border-radius:3px;background:#fff"></div>
<div class="ab" style="left:77.0px;top:1140.17px;width:35.6px;height:40.63px;background:#f9f9f9"></div>
<div class="ab" style="left:114.6px;top:1140.17px;width:45.7px;height:40.63px;background:#f9f9f9"></div>
<div class="ab" style="left:162.3px;top:1140.17px;width:64.0px;height:40.63px;background:#f9f9f9"></div>
<div class="ab" style="left:228.3px;top:1140.17px;width:83.5px;height:40.63px;background:#f9f9f9"></div>
<div class="ab" style="left:313.8px;top:1140.17px;width:88.4px;height:40.63px;background:#f9f9f9"></div>
<div class="ab" style="left:404.2px;top:1140.17px;width:126.3px;height:40.63px;background:#f9f9f9"></div>
<div class="ab" style="left:532.5px;top:1140.17px;width:133.0px;height:40.63px;background:#f9f9f9"></div>
<div class="ab" style="left:667.5px;top:1140.17px;width:71.7px;height:40.63px;background:#f9f9f9"></div>
<div class="ab" style="left:741.2px;top:1140.17px;width:108.8px;height:40.63px;background:#f9f9f9"></div>
<div class="ab" style="left:852.0px;top:1140.17px;width:104.4px;height:40.63px;background:#f9f9f9"></div>
<div class="ab" style="left:958.4px;top:1140.17px;width:115.0px;height:40.63px;background:#f9f9f9"></div>
<div class="ab" style="left:1075.4px;top:1140.17px;width:139.3px;height:40.63px;background:#f9f9f9"></div>
<div class="ab" style="left:1216.7px;top:1140.17px;width:67.3px;height:40.63px;background:#f9f9f9"></div>
<div class="ab" style="left:1286.0px;top:1140.17px;width:109.7px;height:40.63px;background:#f9f9f9"></div>
<div class="ab" style="left:1397.7px;top:1140.17px;width:109.5px;height:40.63px;background:#f9f9f9"></div>
<div class="ab" style="left:1509.2px;top:1140.17px;width:109.1px;height:40.63px;background:#f9f9f9"></div>
<div class="ab" style="left:1620.3px;top:1140.17px;width:100.3px;height:40.63px;background:#f9f9f9"></div>
<div class="ab" style="left:1722.6px;top:1140.17px;width:59.4px;height:40.63px;background:#f9f9f9"></div>
<div class="ab" style="left:1784.0px;top:1140.17px;width:115.5px;height:40.63px;background:#f9f9f9"></div>
<div class="ab" style="left:1901.5px;top:1140.17px;width:182.1px;height:40.63px;background:#f9f9f9"></div>
<div class="ab" style="left:2085.6px;top:1140.17px;width:88.2px;height:40.63px;background:#f9f9f9"></div>
<div class="ab" style="left:2175.8px;top:1140.17px;width:72.9px;height:40.63px;background:#f9f9f9"></div>
<div class="ab" style="left:2250.7px;top:1140.17px;width:103.3px;height:40.63px;background:#f9f9f9"></div>
<div class="ab" style="left:87.4px;top:1154.77px;width:15.2px;height:15px;box-sizing:border-box;border:1.5px solid #8a8a8a;border-radius:3px;background:#fff"></div>
<svg style="left:129px;top:1153.87px" width="18" height="18" viewBox="0 0 18 18"><defs><radialGradient id="gy"><stop offset="0" stop-color="#e4e13a"/><stop offset="0.45" stop-color="#cbe045"/><stop offset="1" stop-color="#78ad2e"/></radialGradient></defs><circle cx="9" cy="9" r="8.1" fill="url(#gy)" stroke="#4f7a22" stroke-width="1.6"/></svg>
<svg style="left:185px;top:1156.17px" width="19" height="16" viewBox="0 0 19 16"><path d="M11 1.1 L3.2 1.1 Q0.7 1.1 0.7 3.6 L0.7 12.6 Q0.7 15.1 3.2 15.1 L12.3 15.1 Q14.8 15.1 14.8 12.6 L14.8 8" fill="none" stroke="#3e9898" stroke-width="1.5"/><path d="M6.2 13.4 L7.1 10.2 L16.3 1 L18.5 3.2 L9.3 12.4 Z" fill="#2a8f8f"/><path d="M15 2.3 L17.2 4.5" stroke="#fff" stroke-width="0.6" opacity="0.7"/></svg>
<div class="t" style="left:228.34375px;width:83.5px;text-align:center;top:1154.02px;font-size:14px;line-height:14px;color:#454545;letter-spacing:0.088px;">N/A</div>
<div class="t" style="left:532.4811941964285px;width:133.0px;text-align:center;top:1154.02px;font-size:14px;line-height:14px;color:#454545;letter-spacing:-0.038px;">Carslbad Plant</div>
<div class="t" style="left:667.483203125px;width:71.7px;text-align:center;top:1154.02px;font-size:14px;line-height:14px;color:#454545;letter-spacing:-0.034px;">Make</div>
<div class="t" style="left:741.3317708333334px;width:108.8px;text-align:center;top:1154.02px;font-size:14px;line-height:14px;color:#454545;letter-spacing:0.264px;">Normal</div>
<div class="t" style="left:958.3129557291667px;width:115.0px;text-align:center;top:1154.02px;font-size:14px;line-height:14px;color:#454545;letter-spacing:-0.174px;">Safety Stock</div>
<div class="t" style="left:1075.3640625px;width:139.3px;text-align:center;top:1154.02px;font-size:14px;line-height:14px;color:#454545;letter-spacing:-0.072px;">Firm</div>
<div class="t" style="left:1286.067396875px;width:109.7px;text-align:center;top:1154.02px;font-size:14px;line-height:14px;color:#454545;letter-spacing:0.135px;">10/27/2021</div>
<div class="t" style="left:1397.767396875px;width:109.5px;text-align:center;top:1154.02px;font-size:14px;line-height:14px;color:#454545;letter-spacing:0.135px;">02/08/2022</div>
<div class="t" style="left:1509.267396875px;width:109.1px;text-align:center;top:1154.02px;font-size:14px;line-height:14px;color:#4c9e9d;letter-spacing:0.135px;">02/08/2022</div>
<div class="t" style="left:1620.2413411458333px;width:100.3px;text-align:center;top:1154.02px;font-size:14px;line-height:14px;color:#4c9e9d;letter-spacing:-0.117px;">10,516</div>
<div class="t" style="left:1722.33203125px;width:59.4px;text-align:center;top:1154.02px;font-size:14px;line-height:14px;color:#454545;letter-spacing:-0.536px;">ea</div>
<div class="t" style="left:1783.94240625px;width:115.5px;text-align:center;top:1154.02px;font-size:14px;line-height:14px;color:#454545;letter-spacing:-0.115px;">$10,516.00</div>
<div class="t" style="left:1901.5475px;width:182.1px;text-align:center;top:1154.02px;font-size:14px;line-height:14px;color:#4c9e9d;letter-spacing:0.095px;">Carslbad Plant*</div>
<div class="t" style="left:2250.7479166666667px;width:103.3px;text-align:center;top:1154.02px;font-size:14px;line-height:14px;color:#454545;letter-spacing:0.096px;">Program A</div>
<div class="t" style="left:324.6px;top:1154.02px;font-size:14px;line-height:14px;color:#454545;letter-spacing:-0.128px;">96743</div>
<div class="t" style="left:414.4px;top:1154.02px;font-size:14px;line-height:14px;color:#454545;letter-spacing:0.055px;">Gadget 4</div>
<div class="ab" style="left:2121.8px;top:1154.87px;width:15.2px;height:15px;box-sizing:border-box;border:1.5px solid #8a8a8a;border-radius:3px;background:#fff"></div>
<div class="ab" style="left:2204.6px;top:1154.87px;width:15.2px;height:15px;box-sizing:border-box;border:1.5px solid #8a8a8a;border-radius:3px;background:#fff"></div>
<div class="t" style="left:75.9px;top:1232.10px;font-size:15px;line-height:15px;color:#4a4a4a;letter-spacing:-0.167px;">page</div>
<div class="ab" style="left:117px;top:1222.2px;width:91px;height:37px;box-sizing:border-box;border:1px solid #e2e2e2;border-radius:3px;background:#fff"></div>
<svg style="left:211.5px;top:1231px" width="20" height="20" viewBox="0 0 20 20"><circle cx="8" cy="8" r="6" fill="none" stroke="#0b7f80" stroke-width="2.8"/><path d="M12.3 12.3 L17.5 17.5" stroke="#0b7f80" stroke-width="3.2" stroke-linecap="round"/></svg>
<div class="ab" style="left:273px;top:1220.8px;width:693.5px;height:40.2px;box-sizing:border-box;border:1px solid #e6e6e6;border-radius:5px;background:#fff;overflow:hidden"><div class="ab" style="left:0;top:0;width:149px;height:40px;background:#f3f3f3"></div></div>
<div class="ab" style="left:322.3px;top:1221px;width:1px;height:39.8px;background:#e8e8e8"></div>
<div class="ab" style="left:372.5px;top:1221px;width:1px;height:39.8px;background:#e8e8e8"></div>
<div class="ab" style="left:421.5px;top:1221px;width:1px;height:39.8px;background:#e8e8e8"></div>
<div class="ab" style="left:471.3px;top:1221px;width:1px;height:39.8px;background:#e8e8e8"></div>
<div class="ab" style="left:520.8px;top:1221px;width:1px;height:39.8px;background:#e8e8e8"></div>
<div class="ab" style="left:570.3px;top:1221px;width:1px;height:39.8px;background:#e8e8e8"></div>
<div class="ab" style="left:619.4px;top:1221px;width:1px;height:39.8px;background:#e8e8e8"></div>
<div class="ab" style="left:668.9px;top:1221px;width:1px;height:39.8px;background:#e8e8e8"></div>
<div class="ab" style="left:718.2px;top:1221px;width:1px;height:39.8px;background:#e8e8e8"></div>
<div class="ab" style="left:768.2px;top:1221px;width:1px;height:39.8px;background:#e8e8e8"></div>
<div class="ab" style="left:817.5px;top:1221px;width:1px;height:39.8px;background:#e8e8e8"></div>
<div class="ab" style="left:867.4px;top:1221px;width:1px;height:39.8px;background:#e8e8e8"></div>
<div class="ab" style="left:916.7px;top:1221px;width:1px;height:39.8px;background:#e8e8e8"></div>
<div class="t" style="left:373px;width:49px;text-align:center;top:1233.10px;font-size:15px;line-height:15px;color:#999;">1</div>
<div class="t" style="left:422px;width:49.8px;text-align:center;top:1233.10px;font-size:15px;line-height:15px;color:#333;">2</div>
<div class="t" style="left:471.8px;width:49.5px;text-align:center;top:1233.10px;font-size:15px;line-height:15px;color:#333;">3</div>
<div class="t" style="left:521.3px;width:49.5px;text-align:center;top:1233.10px;font-size:15px;line-height:15px;color:#333;">4</div>
<div class="t" style="left:570.8px;width:49.1px;text-align:center;top:1233.10px;font-size:15px;line-height:15px;color:#333;">5</div>
<div class="t" style="left:619.9px;width:49.5px;text-align:center;top:1233.10px;font-size:15px;line-height:15px;color:#333;">6</div>
<div class="t" style="left:669.4px;width:49.3px;text-align:center;top:1233.10px;font-size:15px;line-height:15px;color:#333;">7</div>
<div class="t" style="left:718.7px;width:50.0px;text-align:center;top:1233.10px;font-size:15px;line-height:15px;color:#333;">8</div>
<div class="t" style="left:768.7px;width:49.3px;text-align:center;top:1233.10px;font-size:15px;line-height:15px;color:#333;">9</div>
<div class="t" style="left:818px;width:49.9px;text-align:center;top:1233.10px;font-size:15px;line-height:15px;color:#333;">10</div>
<svg style="left:0px;top:0px" width="1" height="1" viewBox="0 0 1 1"><path d="M297.4 1236 L292.4 1241 L297.4 1246" fill="none" stroke="#888" stroke-width="1.7"/><path d="M303.4 1236 L298.4 1241 L303.4 1246" fill="none" stroke="#888" stroke-width="1.7"/><path d="M350.4 1236 L345.4 1241 L350.4 1246" fill="none" stroke="#888" stroke-width="1.7"/><path d="M890.05 1236 L895.05 1241 L890.05 1246" fill="none" stroke="#2a9494" stroke-width="1.9"/><path d="M936.35 1236 L941.35 1241 L936.35 1246" fill="none" stroke="#2a9494" stroke-width="1.9"/><path d="M942.35 1236 L947.35 1241 L942.35 1246" fill="none" stroke="#2a9494" stroke-width="1.9"/></svg>
<div class="ab" style="left:2196.4px;top:1223px;width:159.3px;height:36.2px;box-sizing:border-box;border:1px solid #ececec;border-radius:3px;background:#fff"></div>
<div class="t" style="left:2205px;top:1233.96px;font-size:16px;line-height:16px;color:#5e5e5e;letter-spacing:-0.190px;">Page size (20)</div>
<svg style="left:2338.5px;top:1237.5px" width="11" height="7" viewBox="0 0 11 7"><path d="M0.8 0.8 L5.5 5.6 L10.2 0.8" fill="none" stroke="#333" stroke-width="1.6"/></svg>
</body></html>
